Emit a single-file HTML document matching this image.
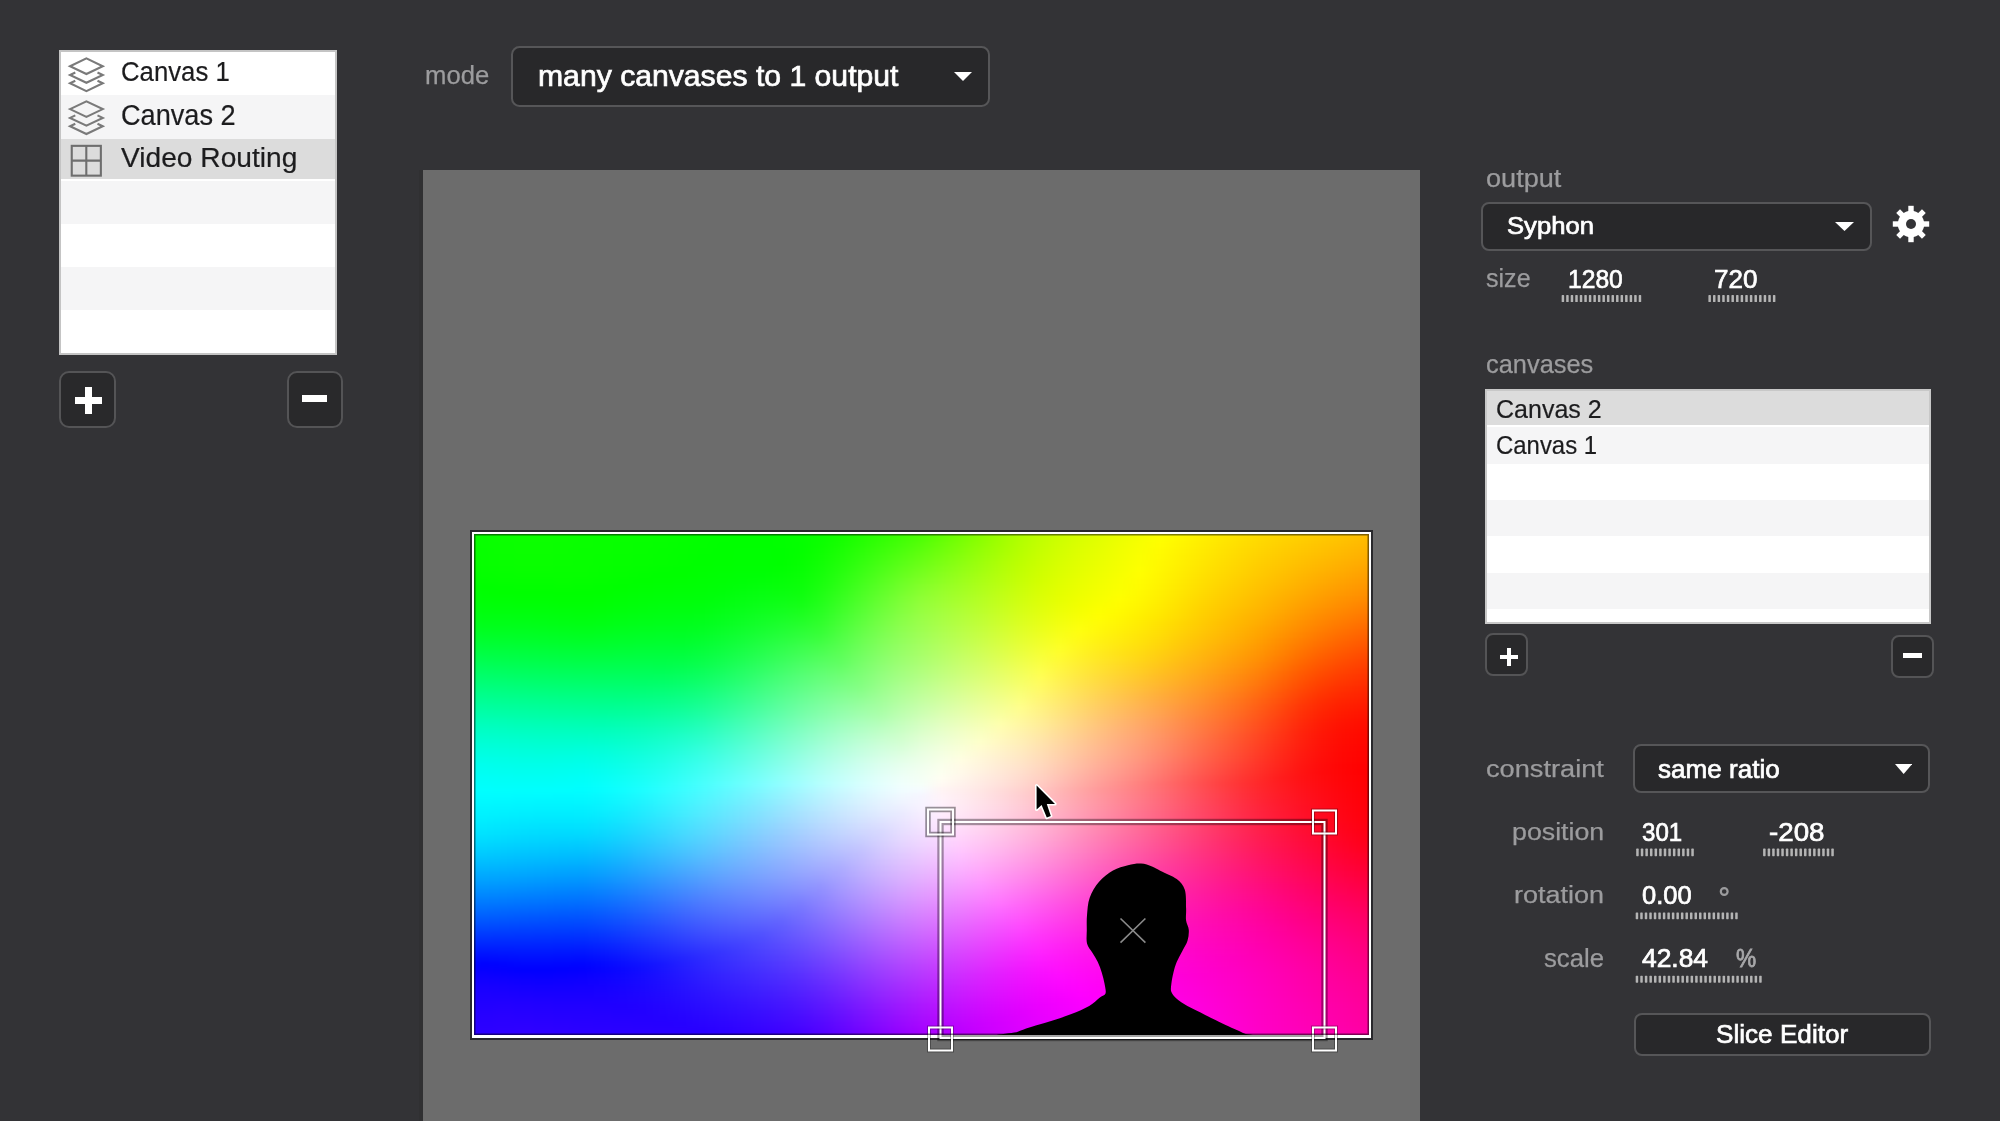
<!DOCTYPE html>
<html><head><meta charset="utf-8"><style>
html,body{margin:0;padding:0;}
body{width:2000px;height:1121px;background:#333336;position:relative;overflow:hidden;font-family:"Liberation Sans",sans-serif;}
.t{position:absolute;line-height:1;white-space:nowrap;transform-origin:0 0;}
</style></head><body>
<div style="position:absolute;left:59px;top:50px;width:278px;height:305px;background:#fff;box-shadow:inset 0 0 0 2px #c4c4c4;"></div>
<div style="position:absolute;left:61px;top:52px;width:274px;height:43px;background:#ffffff;"></div>
<div style="position:absolute;left:61px;top:95px;width:274px;height:43.5px;background:#f5f5f6;"></div>
<div style="position:absolute;left:61px;top:138.5px;width:274px;height:42.5px;background:#ffffff;"></div>
<div style="position:absolute;left:61px;top:181px;width:274px;height:43px;background:#f5f5f6;"></div>
<div style="position:absolute;left:61px;top:224px;width:274px;height:43px;background:#ffffff;"></div>
<div style="position:absolute;left:61px;top:267px;width:274px;height:43px;background:#f5f5f6;"></div>
<div style="position:absolute;left:61px;top:310px;width:274px;height:43px;background:#ffffff;"></div>
<div style="position:absolute;left:61px;top:138.5px;width:274px;height:40.0px;background:#dcdcdc;"></div>
<svg style="position:absolute;left:0;top:0" width="120" height="200" viewBox="0 0 120 200" fill="none" stroke="#7a7a7a" stroke-width="2.1" stroke-linejoin="miter">
<g transform="translate(0,0)">
<path d="M70.05 66.2 L86.4 58.4 L102.75 66.2 L86.4 74 Z"/>
<path d="M75.3 72.5 L70.05 75 L86.4 82.8 L102.75 75 L97.5 72.5"/>
<path d="M75.3 80.8 L70.05 83.3 L86.4 91.1 L102.75 83.3 L97.5 80.8"/>
</g></svg>
<svg style="position:absolute;left:0;top:0" width="120" height="200" viewBox="0 0 120 200" fill="none" stroke="#7a7a7a" stroke-width="2.1" stroke-linejoin="miter">
<g transform="translate(0,42.9)">
<path d="M70.05 66.2 L86.4 58.4 L102.75 66.2 L86.4 74 Z"/>
<path d="M75.3 72.5 L70.05 75 L86.4 82.8 L102.75 75 L97.5 72.5"/>
<path d="M75.3 80.8 L70.05 83.3 L86.4 91.1 L102.75 83.3 L97.5 80.8"/>
</g></svg>
<svg style="position:absolute;left:0;top:0" width="120" height="200" viewBox="0 0 120 200" fill="none" stroke="#6e6e6e" stroke-width="2.1"><rect x="71.75" y="145.85" width="29.1" height="29.8"/><path d="M86.3 145.85 V175.65 M71.75 160.6 H100.85"/></svg>
<div class="t" style="left:121.40px;top:58.11px;font-size:27.93px;color:#1c1c1e;transform:scaleX(0.9220);-webkit-text-stroke:0.2px #1c1c1e;">Canvas 1</div>
<div class="t" style="left:121.30px;top:100.65px;font-size:28.64px;color:#1c1c1e;transform:scaleX(0.9478);-webkit-text-stroke:0.2px #1c1c1e;">Canvas 2</div>
<div class="t" style="left:121.30px;top:144.83px;font-size:26.90px;color:#1c1c1e;transform:scaleX(1.0468);-webkit-text-stroke:0.2px #1c1c1e;">Video Routing</div>
<div style="position:absolute;left:59px;top:371px;width:57px;height:57px;background:#29292b;border:2px solid #545456;border-radius:10px;box-sizing:border-box;"></div>
<div style="position:absolute;left:74.6px;top:396.8px;width:27.900000000000006px;height:7.099999999999966px;background:#fff;"></div>
<div style="position:absolute;left:85px;top:386.8px;width:7px;height:27.5px;background:#fff;"></div>
<div style="position:absolute;left:287px;top:371px;width:56px;height:57px;background:#29292b;border:2px solid #545456;border-radius:10px;box-sizing:border-box;"></div>
<div style="position:absolute;left:302px;top:395px;width:25px;height:7px;background:#fff;"></div>
<div class="t" style="left:425.12px;top:62.55px;font-size:25.34px;color:#9c9c9e;transform:scaleX(1.0140);-webkit-text-stroke:0.25px #9c9c9e;">mode</div>
<div style="position:absolute;left:511px;top:46px;width:479px;height:60.5px;background:#28282a;border:2px solid #565658;border-radius:8.5px;box-sizing:border-box;"></div>
<div class="t" style="left:537.85px;top:60.99px;font-size:29.78px;color:#ffffff;transform:scaleX(1.0132);-webkit-text-stroke:0.7px #ffffff;">many canvases to 1 output</div>
<svg style="position:absolute;left:954px;top:72px" width="18" height="9" viewBox="0 0 18 9"><path d="M0 0 H18 L9.0 9 Z" fill="#fff"/></svg>
<div style="position:absolute;left:419px;top:170px;width:4px;height:951px;background:#303032;"></div>
<div style="position:absolute;left:423px;top:170px;width:997px;height:951px;background:#6c6c6c;"></div>
<div style="position:absolute;left:470.3px;top:530.3px;width:902.4000000000001px;height:509.4000000000001px;background:#28282c;"></div>
<div style="position:absolute;left:472px;top:532px;width:899px;height:506px;background:#fff;"></div>
<div style="position:absolute;left:474px;top:534px;width:895px;height:501px;overflow:hidden;"><div style="position:absolute;inset:0;box-shadow:inset 0 0 0 1.5px rgba(0,0,0,0.5);z-index:2"></div><div id="grad" style="position:absolute;left:-10px;top:-10px;width:915px;height:521px;filter:blur(2px);"><div style="height:5.989px;background:linear-gradient(90deg,#07ff00,#0aff00,#0cff00,#0cff00,#0cff00,#0bff00,#0aff00,#09ff00,#09ff00,#08ff00,#07ff00,#05ff00,#03ff00,#02ff00,#01ff00,#01ff00,#02ff00,#05ff00,#0bff00,#14ff00,#1fff00,#2bff00,#39ff00,#48ff00,#5bff00,#71ff00,#86ff00,#9aff00,#acff00,#bcff00,#c9ff00,#d5ff00,#dfff00,#e9ff00,#f2ff00,#faff00,#fffb00,#fff400,#ffed00,#ffe600,#ffdf00,#ffd900,#ffd400,#ffcf00,#ffca00,#ffc500,#ffbf00)"></div><div style="height:5.989px;background:linear-gradient(90deg,#07ff00,#09ff00,#0bff00,#0cff00,#0cff00,#0bff00,#09ff00,#09ff00,#08ff00,#08ff00,#06ff00,#04ff00,#03ff00,#01ff00,#00ff00,#00ff00,#02ff00,#05ff00,#0bff00,#15ff00,#20ff00,#2eff01,#3cff01,#4bff01,#5fff01,#74ff00,#89ff00,#9dff00,#afff00,#bfff00,#ccff00,#d7ff00,#e1ff00,#ebff00,#f4ff00,#fcff00,#fff900,#fff200,#ffea00,#ffe300,#ffdc00,#ffd600,#ffd100,#ffcc00,#ffc600,#ffc100,#ffbb00)"></div><div style="height:5.989px;background:linear-gradient(90deg,#06ff00,#08ff00,#0bff00,#0cff00,#0cff00,#0bff00,#09ff00,#08ff00,#08ff00,#07ff00,#06ff00,#04ff00,#02ff00,#01ff00,#00ff00,#00ff00,#01ff00,#05ff00,#0bff00,#16ff00,#24ff02,#32ff04,#41ff05,#50ff05,#64ff04,#78ff03,#8cff00,#a0ff00,#b2ff00,#c1ff00,#ceff00,#d9ff00,#e3ff00,#edff00,#f6ff00,#feff00,#fff700,#ffef00,#ffe800,#ffe000,#ffd900,#ffd300,#ffce00,#ffc800,#ffc300,#ffbd00,#ffb700)"></div><div style="height:5.989px;background:linear-gradient(90deg,#05ff00,#08ff00,#0aff00,#0bff00,#0bff00,#0aff00,#09ff00,#08ff00,#07ff00,#06ff00,#05ff00,#03ff00,#02ff00,#00ff00,#00ff00,#00ff00,#01ff00,#04ff00,#0cff00,#18ff02,#27ff05,#37ff07,#46ff09,#56ff09,#6aff08,#7dff06,#90ff03,#a3ff00,#b5ff00,#c4ff00,#d1ff00,#dcff00,#e5ff00,#efff00,#f8ff00,#fffd00,#fff500,#ffed00,#ffe500,#ffde00,#ffd700,#ffd000,#ffca00,#ffc400,#ffbf00,#ffb900,#ffb300)"></div><div style="height:5.989px;background:linear-gradient(90deg,#05ff00,#07ff00,#0aff00,#0bff00,#0bff00,#0aff00,#08ff00,#08ff00,#07ff00,#06ff00,#04ff00,#03ff00,#01ff00,#00ff00,#00ff01,#00ff01,#00ff00,#04ff00,#0eff01,#1cff05,#2cff08,#3cff0b,#4cff0d,#5dff0d,#6fff0c,#82ff09,#95ff06,#a6ff02,#b7ff00,#c6ff00,#d3ff00,#deff00,#e7ff00,#f1ff00,#f9ff00,#fffb00,#fff300,#ffeb00,#ffe300,#ffdb00,#ffd400,#ffcd00,#ffc700,#ffc100,#ffbb00,#ffb500,#ffaf00)"></div><div style="height:5.989px;background:linear-gradient(90deg,#04ff00,#07ff00,#09ff00,#0aff00,#0aff00,#09ff00,#08ff00,#07ff00,#06ff00,#05ff00,#04ff00,#02ff00,#00ff00,#00ff00,#00ff01,#00ff01,#00ff00,#05ff00,#10ff03,#1fff07,#30ff0c,#41ff0f,#53ff11,#64ff11,#76ff10,#87ff0d,#99ff09,#aaff04,#baff00,#c9ff00,#d5ff00,#e0ff00,#e9ff00,#f2ff00,#fbff00,#fffa00,#fff100,#ffe900,#ffe100,#ffd900,#ffd100,#ffca00,#ffc300,#ffbd00,#ffb700,#ffb100,#ffaa00)"></div><div style="height:5.989px;background:linear-gradient(90deg,#03ff00,#06ff00,#08ff00,#09ff00,#09ff00,#08ff00,#07ff00,#06ff00,#05ff00,#04ff00,#03ff00,#01ff00,#00ff00,#00ff01,#00ff02,#00ff02,#00ff00,#06ff02,#12ff05,#22ff0a,#34ff0f,#47ff13,#59ff16,#6aff16,#7cff14,#8dff11,#9dff0c,#aeff06,#bdff01,#cbff00,#d8ff00,#e2ff00,#ebff00,#f4ff00,#fcff00,#fff800,#fff000,#ffe700,#ffde00,#ffd600,#ffce00,#ffc700,#ffc000,#ffb900,#ffb200,#ffac00,#ffa600)"></div><div style="height:5.989px;background:linear-gradient(90deg,#02ff00,#05ff00,#07ff00,#08ff00,#08ff00,#07ff00,#07ff00,#05ff00,#04ff00,#03ff00,#01ff00,#00ff00,#00ff01,#00ff02,#00ff03,#00ff03,#01ff02,#07ff04,#14ff08,#25ff0d,#39ff13,#4cff18,#5fff1a,#71ff1b,#82ff19,#92ff15,#a1ff0f,#b1ff09,#c0ff02,#ceff00,#daff00,#e4ff00,#edff00,#f5ff00,#feff00,#fff700,#ffee00,#ffe500,#ffdc00,#ffd400,#ffcb00,#ffc400,#ffbc00,#ffb500,#ffae00,#ffa700,#ffa100)"></div><div style="height:5.989px;background:linear-gradient(90deg,#00ff00,#04ff00,#05ff00,#06ff00,#06ff00,#06ff00,#06ff00,#04ff00,#03ff00,#01ff00,#00ff00,#00ff00,#00ff02,#00ff04,#00ff05,#00ff05,#03ff05,#09ff06,#17ff0a,#29ff11,#3dff17,#52ff1c,#66ff1f,#78ff20,#88ff1e,#97ff19,#a6ff12,#b5ff0b,#c3ff04,#d0ff00,#dcff00,#e6ff00,#efff00,#f7ff00,#fffe00,#fff500,#ffec00,#ffe200,#ffd900,#ffd100,#ffc900,#ffc000,#ffb800,#ffb000,#ffa900,#ffa200,#ff9c00)"></div><div style="height:5.989px;background:linear-gradient(90deg,#00ff02,#02ff00,#04ff00,#04ff00,#04ff00,#05ff00,#04ff00,#03ff00,#01ff00,#00ff00,#00ff01,#00ff02,#00ff04,#00ff05,#00ff07,#02ff08,#05ff08,#0bff08,#19ff0d,#2dff14,#42ff1b,#57ff21,#6cff25,#7eff25,#8dff23,#9cff1d,#aaff16,#b8ff0e,#c6ff06,#d3ff00,#dfff00,#e9ff00,#f1ff00,#f9ff00,#fffc00,#fff400,#ffea00,#ffe000,#ffd700,#ffce00,#ffc500,#ffbd00,#ffb400,#ffac00,#ffa400,#ff9d00,#ff9700)"></div><div style="height:5.989px;background:linear-gradient(90deg,#00ff04,#00ff00,#01ff00,#02ff00,#02ff00,#03ff00,#02ff00,#01ff00,#00ff00,#00ff02,#00ff03,#00ff04,#00ff05,#00ff07,#01ff0a,#04ff0c,#07ff0b,#0cff0b,#1cff10,#30ff18,#46ff20,#5cff26,#71ff2a,#84ff2b,#93ff28,#a0ff22,#aeff1a,#bbff12,#c9ff09,#d6ff02,#e1ff00,#ebff00,#f3ff00,#faff00,#fffb00,#fff200,#ffe800,#ffde00,#ffd400,#ffcb00,#ffc200,#ffb900,#ffb000,#ffa700,#ff9f00,#ff9800,#ff9100)"></div><div style="height:5.989px;background:linear-gradient(90deg,#00ff06,#00ff02,#00ff00,#00ff00,#00ff00,#00ff00,#00ff00,#00ff00,#00ff03,#00ff05,#00ff06,#00ff07,#00ff08,#00ff0a,#03ff0e,#06ff10,#09ff0f,#0eff0e,#1fff14,#34ff1c,#4bff24,#61ff2b,#77ff2f,#8aff30,#98ff2d,#a4ff26,#b1ff1e,#bfff15,#ccff0c,#d9ff04,#e4ff00,#edff00,#f5ff00,#fcff00,#fff900,#fff000,#ffe600,#ffdb00,#ffd100,#ffc800,#ffbf00,#ffb500,#ffac00,#ffa200,#ff9a00,#ff9300,#ff8c00)"></div><div style="height:5.989px;background:linear-gradient(90deg,#00ff09,#00ff05,#00ff04,#00ff03,#00ff03,#00ff02,#00ff02,#00ff03,#00ff06,#00ff08,#00ff09,#00ff0a,#00ff0a,#01ff0e,#05ff12,#08ff14,#0cff14,#11ff12,#22ff18,#38ff21,#4fff29,#66ff30,#7cff35,#8fff36,#9cff32,#a8ff2b,#b5ff23,#c2ff19,#cfff0f,#dcff07,#e6ff01,#f0ff00,#f7ff00,#fffe00,#fff700,#ffee00,#ffe300,#ffd800,#ffce00,#ffc500,#ffbb00,#ffb100,#ffa700,#ff9d00,#ff9400,#ff8d00,#ff8600)"></div><div style="height:5.989px;background:linear-gradient(90deg,#00ff0d,#00ff09,#00ff08,#00ff07,#00ff07,#00ff05,#00ff05,#00ff06,#00ff09,#00ff0b,#00ff0d,#00ff0d,#00ff0e,#02ff12,#06ff16,#0bff19,#10ff19,#15ff17,#25ff1d,#3cff26,#53ff2f,#6aff35,#80ff3a,#93ff3b,#a0ff37,#acff30,#b8ff27,#c5ff1d,#d2ff13,#deff0a,#e9ff04,#f2ff00,#faff00,#fffc00,#fff500,#ffeb00,#ffe000,#ffd500,#ffcb00,#ffc200,#ffb800,#ffad00,#ffa200,#ff9800,#ff8f00,#ff8700,#ff8000)"></div><div style="height:5.989px;background:linear-gradient(90deg,#00ff12,#00ff0d,#00ff0c,#00ff0c,#00ff0b,#00ff0a,#00ff09,#00ff0a,#00ff0d,#00ff0f,#00ff11,#00ff11,#00ff12,#04ff17,#08ff1b,#0eff1e,#13ff1f,#1aff1d,#29ff22,#40ff2b,#57ff34,#6eff3b,#83ff3f,#96ff40,#a3ff3d,#afff36,#bbff2c,#c8ff22,#d5ff17,#e1ff0e,#ecff07,#f5ff02,#fdff00,#fffa00,#fff200,#ffe900,#ffde00,#ffd200,#ffc800,#ffbe00,#ffb400,#ffa900,#ff9d00,#ff9200,#ff8900,#ff8000,#ff7900)"></div><div style="height:5.989px;background:linear-gradient(90deg,#00ff17,#00ff12,#00ff12,#00ff11,#00ff10,#00ff0e,#00ff0d,#00ff0f,#00ff12,#00ff14,#00ff15,#00ff16,#01ff17,#05ff1c,#0aff20,#11ff24,#17ff25,#1fff24,#2dff27,#44ff31,#5bff3a,#72ff40,#87ff45,#99ff46,#a6ff42,#b2ff3b,#beff32,#cbff27,#d8ff1c,#e4ff12,#efff0b,#f8ff05,#fffe02,#fff701,#ffef00,#ffe600,#ffdb01,#ffcf01,#ffc500,#ffba00,#ffb000,#ffa400,#ff9800,#ff8c00,#ff8200,#ff7a00,#ff7300)"></div><div style="height:5.989px;background:linear-gradient(90deg,#00ff1d,#00ff18,#00ff18,#00ff17,#00ff16,#00ff14,#00ff13,#00ff14,#00ff17,#00ff19,#00ff1a,#00ff1b,#01ff1d,#06ff21,#0dff26,#14ff2a,#1cff2c,#24ff2b,#31ff2d,#48ff37,#5fff3f,#76ff46,#8aff4a,#9bff4b,#a9ff47,#b5ff40,#c1ff37,#ceff2c,#dbff21,#e7ff17,#f2ff0f,#fbff09,#fffb06,#fff404,#ffec02,#ffe202,#ffd702,#ffcc02,#ffc101,#ffb700,#ffac00,#ff9f00,#ff9200,#ff8600,#ff7c00,#ff7300,#ff6c00)"></div><div style="height:5.989px;background:linear-gradient(90deg,#00ff24,#00ff1f,#00ff1e,#00ff1e,#00ff1c,#00ff1a,#00ff19,#00ff1a,#00ff1d,#00ff1f,#00ff20,#00ff20,#02ff22,#08ff27,#0fff2c,#17ff30,#20ff33,#2aff33,#35ff33,#4cff3d,#63ff45,#79ff4c,#8dff50,#9dff50,#abff4d,#b8ff46,#c4ff3d,#d1ff32,#deff27,#eaff1c,#f5ff14,#feff0d,#fff809,#fff106,#ffe905,#ffdf04,#ffd404,#ffc904,#ffbe03,#ffb301,#ffa700,#ff9a00,#ff8d00,#ff8000,#ff7500,#ff6c00,#ff6500)"></div><div style="height:5.989px;background:linear-gradient(90deg,#00ff2c,#00ff27,#00ff26,#00ff25,#00ff24,#00ff22,#00ff20,#00ff21,#00ff24,#00ff25,#00ff26,#00ff26,#03ff29,#0aff2e,#12ff33,#1bff37,#25ff3a,#2fff3b,#39ff3a,#50ff43,#67ff4c,#7cff52,#8fff56,#a0ff56,#aeff53,#bbff4c,#c7ff43,#d4ff38,#e1ff2c,#edff22,#f8ff19,#fffc12,#fff50d,#ffed0a,#ffe507,#ffdc06,#ffd006,#ffc505,#ffba04,#ffaf02,#ffa300,#ff9500,#ff8700,#ff7a00,#ff6e00,#ff6500,#ff5e00)"></div><div style="height:5.989px;background:linear-gradient(90deg,#00ff34,#00ff30,#00ff2e,#00ff2d,#00ff2b,#00ff29,#00ff28,#00ff29,#00ff2b,#00ff2c,#00ff2d,#00ff2c,#04ff30,#0bff35,#14ff3a,#1fff3f,#2aff42,#35ff43,#40ff42,#54ff4a,#6bff52,#80ff58,#92ff5c,#a2ff5c,#b0ff59,#bdff52,#caff49,#d7ff3e,#e4ff33,#f0ff28,#fbff1f,#fff917,#fff112,#ffea0e,#ffe20a,#ffd809,#ffcc08,#ffc107,#ffb606,#ffab03,#ff9e01,#ff8f00,#ff8100,#ff7300,#ff6700,#ff5e00,#ff5800)"></div><div style="height:5.989px;background:linear-gradient(90deg,#00ff3d,#00ff39,#00ff37,#00ff36,#00ff34,#00ff32,#00ff31,#00ff31,#00ff33,#00ff34,#00ff34,#00ff34,#05ff37,#0dff3c,#17ff42,#23ff46,#2fff4a,#3bff4c,#46ff4b,#58ff50,#6eff58,#83ff5e,#95ff62,#a5ff62,#b3ff5f,#c0ff59,#cdff50,#daff45,#e7ff39,#f3ff2f,#fdff25,#fff61e,#ffee18,#ffe612,#ffde0e,#ffd40c,#ffc80b,#ffbd0a,#ffb108,#ffa605,#ff9902,#ff8a00,#ff7a00,#ff6c00,#ff6000,#ff5700,#ff5100)"></div><div style="height:5.989px;background:linear-gradient(90deg,#00ff47,#00ff43,#00ff41,#00ff3f,#00ff3d,#00ff3b,#00ff3a,#00ff3a,#00ff3b,#00ff3c,#00ff3c,#01ff3c,#07ff3f,#0fff44,#1aff49,#26ff4e,#34ff52,#41ff54,#4dff54,#5cff56,#72ff5f,#86ff65,#98ff68,#a7ff68,#b5ff65,#c3ff60,#d0ff57,#dcff4c,#e9ff40,#f6ff36,#fffd2c,#fff324,#ffea1d,#ffe217,#ffda12,#ffcf10,#ffc40f,#ffb80d,#ffad0a,#ffa106,#ff9403,#ff8401,#ff7400,#ff6500,#ff5900,#ff5000,#ff4a00)"></div><div style="height:5.989px;background:linear-gradient(90deg,#00ff51,#00ff4d,#00ff4a,#00ff48,#00ff46,#00ff44,#00ff43,#00ff43,#00ff44,#00ff44,#00ff44,#02ff44,#08ff47,#11ff4c,#1dff51,#2aff56,#38ff5a,#46ff5d,#53ff5d,#5fff5d,#75ff65,#89ff6b,#9bff6e,#aaff6e,#b8ff6c,#c6ff67,#d2ff5e,#dfff53,#ecff48,#f8ff3d,#fffa33,#fff02b,#ffe724,#ffdf1d,#ffd617,#ffcb14,#ffbf13,#ffb410,#ffa80c,#ff9c08,#ff8f04,#ff7e02,#ff6d00,#ff5e00,#ff5200,#ff4900,#ff4400)"></div><div style="height:5.989px;background:linear-gradient(90deg,#00ff5b,#00ff57,#00ff54,#00ff52,#00ff50,#00ff4e,#00ff4d,#00ff4d,#00ff4d,#00ff4d,#00ff4c,#03ff4d,#0aff4f,#14ff54,#20ff5a,#2eff5f,#3dff63,#4cff66,#59ff66,#63ff64,#79ff6c,#8dff72,#9eff75,#adff75,#bbff73,#c9ff6e,#d5ff66,#e2ff5b,#efff50,#fbff45,#fff73b,#ffed33,#ffe32b,#ffda24,#ffd11d,#ffc619,#ffba17,#ffaf14,#ffa30f,#ff970a,#ff8906,#ff7803,#ff6600,#ff5700,#ff4b00,#ff4200,#ff3d00)"></div><div style="height:5.989px;background:linear-gradient(90deg,#00ff65,#00ff62,#00ff5f,#00ff5c,#00ff5a,#00ff58,#00ff57,#00ff56,#00ff56,#00ff56,#00ff55,#04ff56,#0bff59,#16ff5d,#24ff63,#32ff67,#42ff6b,#51ff6e,#5fff6f,#6aff6d,#7cff72,#90ff79,#a2ff7c,#b1ff7c,#bfff7a,#ccff75,#d8ff6d,#e5ff63,#f1ff58,#fdff4d,#fff543,#ffea3a,#ffe032,#ffd62b,#ffcd23,#ffc11f,#ffb61c,#ffaa17,#ff9e12,#ff910d,#ff8308,#ff7104,#ff5f01,#ff5000,#ff4400,#ff3c00,#ff3700)"></div><div style="height:5.989px;background:linear-gradient(90deg,#00ff6f,#00ff6c,#00ff69,#00ff66,#00ff64,#00ff62,#00ff61,#00ff60,#00ff60,#00ff5f,#01ff5f,#06ff60,#0dff62,#19ff67,#27ff6b,#37ff70,#47ff74,#56ff77,#64ff78,#70ff76,#80ff79,#94ff80,#a5ff83,#b4ff84,#c2ff82,#cfff7d,#dbff75,#e7ff6b,#f3ff60,#fffe55,#fff24b,#ffe742,#ffdc3a,#ffd232,#ffc82b,#ffbc25,#ffb121,#ffa51c,#ff9816,#ff8b0f,#ff7c0a,#ff6a05,#ff5802,#ff4900,#ff3e00,#ff3600,#ff3200)"></div><div style="height:5.989px;background:linear-gradient(90deg,#00ff79,#00ff76,#00ff74,#00ff71,#00ff6e,#00ff6d,#00ff6b,#00ff6a,#00ff6a,#00ff69,#02ff69,#07ff6a,#10ff6c,#1cff70,#2aff74,#3bff79,#4bff7c,#5bff7f,#6aff80,#76ff7f,#83ff7f,#97ff86,#a9ff8a,#b8ff8b,#c6ff89,#d3ff85,#dfff7d,#eaff73,#f6ff68,#fffc5e,#fff054,#ffe44a,#ffd942,#ffce3a,#ffc332,#ffb82c,#ffac26,#ffa020,#ff9319,#ff8612,#ff760c,#ff6407,#ff5203,#ff4200,#ff3700,#ff3000,#ff2c00)"></div><div style="height:5.989px;background:linear-gradient(90deg,#00ff83,#00ff81,#00ff7e,#00ff7b,#00ff79,#00ff77,#00ff76,#00ff75,#00ff74,#01ff73,#04ff74,#09ff75,#12ff77,#1fff7a,#2eff7e,#3fff81,#50ff85,#60ff87,#6fff89,#7cff88,#87ff86,#9bff8d,#adff92,#bcff93,#caff91,#d6ff8d,#e2ff85,#edff7c,#f8ff71,#fffa66,#ffee5c,#ffe153,#ffd64a,#ffca42,#ffbf3a,#ffb333,#ffa72c,#ff9b25,#ff8e1d,#ff8015,#ff700e,#ff5d08,#ff4b04,#ff3c01,#ff3100,#ff2a00,#ff2700)"></div><div style="height:5.989px;background:linear-gradient(90deg,#00ff8d,#00ff8b,#00ff88,#00ff86,#00ff83,#00ff81,#00ff80,#00ff7f,#00ff7e,#02ff7e,#05ff7e,#0bff7f,#14ff81,#22ff84,#32ff87,#43ff8a,#54ff8d,#65ff90,#75ff91,#82ff91,#8dff8f,#9fff94,#b1ff99,#c0ff9a,#cdff99,#daff95,#e5ff8e,#f0ff84,#faff7a,#fff76f,#ffeb65,#ffdf5b,#ffd252,#ffc64a,#ffba42,#ffae3a,#ffa232,#ff9629,#ff8821,#ff7a18,#ff6910,#ff570a,#ff4405,#ff3501,#ff2b00,#ff2500,#ff2200)"></div><div style="height:5.989px;background:linear-gradient(90deg,#00ff96,#00ff95,#00ff92,#00ff90,#00ff8e,#00ff8c,#00ff8a,#00ff89,#00ff88,#03ff88,#07ff89,#0dff8a,#17ff8b,#25ff8e,#35ff90,#47ff93,#59ff96,#6aff98,#7aff9a,#88ff9a,#93ff99,#a3ff9b,#b5ffa0,#c4ffa2,#d1ffa1,#ddff9d,#e8ff96,#f2ff8d,#fdff82,#fff577,#ffe96d,#ffdc63,#ffcf5a,#ffc352,#ffb64a,#ffaa41,#ff9e37,#ff912e,#ff8324,#ff741b,#ff6313,#ff510c,#ff3e06,#ff2f02,#ff2500,#ff2000,#ff1d00)"></div><div style="height:5.989px;background:linear-gradient(90deg,#00ffa0,#00ff9f,#00ff9c,#00ff9a,#00ff98,#00ff96,#00ff95,#00ff93,#01ff93,#04ff93,#09ff93,#0fff94,#1aff95,#28ff97,#39ff9a,#4bff9c,#5dff9e,#6fffa0,#7fffa2,#8effa3,#9affa2,#a7ffa2,#b9ffa8,#c8ffaa,#d5ffa9,#e1ffa5,#ecff9e,#f5ff95,#fffe8b,#fff380,#ffe775,#ffd96b,#ffcc62,#ffbf5a,#ffb352,#ffa648,#ff993d,#ff8c32,#ff7e28,#ff6f1e,#ff5e15,#ff4b0d,#ff3807,#ff2a03,#ff2000,#ff1b00,#ff1900)"></div><div style="height:5.989px;background:linear-gradient(90deg,#00ffaa,#00ffa9,#00ffa6,#00ffa4,#00ffa2,#00ffa0,#00ff9f,#00ff9d,#02ff9d,#05ff9d,#0bff9e,#12ff9f,#1dffa0,#2cffa1,#3dffa3,#4fffa5,#62ffa7,#74ffa8,#85ffaa,#94ffac,#a0ffab,#abffa9,#bdffaf,#ccffb2,#daffb1,#e5ffad,#efffa6,#f8ff9d,#fffc93,#fff188,#ffe47d,#ffd773,#ffc96a,#ffbc62,#ffaf59,#ffa34f,#ff9543,#ff8837,#ff792c,#ff6a21,#ff5818,#ff460f,#ff3308,#ff2503,#ff1c00,#ff1600,#ff1500)"></div><div style="height:5.989px;background:linear-gradient(90deg,#00ffb3,#00ffb2,#00ffb0,#00ffad,#00ffab,#00ffaa,#00ffa9,#00ffa8,#03ffa7,#07ffa7,#0dffa8,#14ffa9,#1fffaa,#2fffab,#41ffac,#54ffae,#67ffaf,#79ffb0,#8affb2,#99ffb4,#a6ffb4,#b0ffb1,#c1ffb6,#d1ffb9,#deffb9,#e8ffb5,#f2ffae,#fbffa5,#fff99b,#ffef90,#ffe285,#ffd47b,#ffc671,#ffb969,#ffac60,#ff9f55,#ff9148,#ff833b,#ff752f,#ff6524,#ff541a,#ff4111,#ff2f09,#ff2104,#ff1801,#ff1200,#ff1100)"></div><div style="height:5.989px;background:linear-gradient(90deg,#00ffbb,#00ffbb,#00ffb9,#00ffb6,#00ffb5,#00ffb4,#00ffb2,#00ffb1,#04ffb1,#09ffb1,#0fffb2,#17ffb3,#23ffb4,#33ffb5,#45ffb5,#58ffb6,#6bffb7,#7dffb8,#8fffbb,#9fffbd,#acffbd,#b7ffbb,#c6ffbe,#d5ffc1,#e2ffc0,#ecffbc,#f5ffb5,#feffad,#fff7a2,#ffed97,#ffe08c,#ffd282,#ffc478,#ffb670,#ffa967,#ff9c5a,#ff8d4d,#ff7f3f,#ff7033,#ff6027,#ff4f1c,#ff3d13,#ff2b0b,#ff1d05,#ff1402,#ff0f00,#ff0e00)"></div><div style="height:5.989px;background:linear-gradient(90deg,#00ffc4,#00ffc4,#00ffc2,#00ffbf,#00ffbe,#00ffbd,#00ffbc,#01ffbb,#05ffbb,#0affbb,#11ffbc,#1affbd,#26ffbe,#37ffbe,#49ffbe,#5cffbf,#70ffbf,#82ffc1,#94ffc3,#a4ffc5,#b2ffc5,#bdffc4,#caffc5,#d9ffc8,#e6ffc8,#f0ffc4,#f8ffbd,#fffcb4,#fff4aa,#ffea9f,#ffdd93,#ffcf88,#ffc17f,#ffb376,#ffa66c,#ff985f,#ff8a51,#ff7b43,#ff6c36,#ff5c2a,#ff4b1f,#ff3915,#ff270c,#ff1a06,#ff1102,#ff0c00,#ff0b00)"></div><div style="height:5.989px;background:linear-gradient(90deg,#00ffcc,#00ffcc,#00ffca,#00ffc8,#00ffc6,#00ffc6,#00ffc5,#02ffc4,#06ffc4,#0cffc4,#14ffc5,#1effc7,#2affc7,#3bffc7,#4dffc7,#61ffc7,#74ffc8,#87ffc9,#99ffcb,#aaffcd,#b8ffcd,#c4ffcc,#cfffcb,#deffcf,#e9ffcf,#f3ffcb,#fbffc4,#fffabb,#fff1b1,#ffe7a5,#ffda9a,#ffcc8e,#ffbe84,#ffb07b,#ffa371,#ff9564,#ff8655,#ff7746,#ff6738,#ff572c,#ff4621,#ff3516,#ff240d,#ff1707,#ff0f03,#ff0a00,#ff0900)"></div><div style="height:5.989px;background:linear-gradient(90deg,#00ffd4,#00ffd4,#00ffd2,#00ffd0,#00ffce,#00ffce,#00ffce,#02ffcd,#07ffcc,#0effcc,#17ffce,#21ffd0,#2effd0,#3fffd0,#51ffcf,#65ffcf,#79ffcf,#8cffd0,#9effd2,#afffd4,#beffd5,#caffd4,#d3ffd2,#e2ffd6,#edffd6,#f6ffd1,#feffca,#fff7c1,#ffefb7,#ffe4ac,#ffd7a0,#ffc994,#ffbb89,#ffad80,#ffa075,#ff9167,#ff8258,#ff7249,#ff633b,#ff532e,#ff4322,#ff3218,#ff220f,#ff1508,#ff0d03,#ff0800,#ff0700)"></div><div style="height:5.989px;background:linear-gradient(90deg,#00ffdb,#00ffdb,#00ffd9,#00ffd7,#00ffd6,#00ffd6,#00ffd7,#03ffd6,#09ffd4,#10ffd4,#19ffd6,#25ffd8,#33ffd9,#43ffd8,#56ffd7,#69ffd7,#7dffd7,#90ffd8,#a3ffda,#b4ffdb,#c3ffdc,#cfffdc,#d8ffd9,#e6ffdd,#f1ffdc,#f9ffd7,#fffcd0,#fff4c7,#ffecbd,#ffe1b1,#ffd4a5,#ffc699,#ffb88e,#ffaa84,#ff9c78,#ff8e6a,#ff7e5b,#ff6e4b,#ff5f3d,#ff4f30,#ff3f24,#ff2e19,#ff1f10,#ff1309,#ff0b04,#ff0601,#ff0500)"></div><div style="height:5.989px;background:linear-gradient(90deg,#00ffe2,#00ffe2,#00ffe0,#00ffde,#00ffdd,#00ffde,#00ffdf,#03ffdd,#0affdc,#12ffdc,#1cffdd,#28ffe0,#37ffe1,#47ffdf,#5affde,#6dffde,#81ffde,#95ffdf,#a7ffe1,#b8ffe2,#c7ffe3,#d4ffe3,#deffe1,#eaffe3,#f4ffe2,#fcffdd,#fff9d5,#fff1cc,#ffe9c2,#ffdeb6,#ffd1a9,#ffc39d,#ffb591,#ffa787,#ff997b,#ff896d,#ff7a5d,#ff6a4d,#ff5a3f,#ff4b32,#ff3b26,#ff2b1a,#ff1c11,#ff110a,#ff0904,#ff0501,#ff0400)"></div><div style="height:5.989px;background:linear-gradient(90deg,#00ffe8,#00ffe8,#00ffe6,#00ffe4,#00ffe4,#00ffe5,#00ffe6,#04ffe4,#0bffe3,#14ffe3,#1fffe4,#2cffe7,#3affe8,#4bffe6,#5dffe5,#71ffe5,#85ffe5,#99ffe6,#abffe7,#bcffe8,#ccffe9,#d9ffe9,#e3ffe8,#edffe8,#f7ffe7,#fffee2,#fff6da,#ffeed0,#ffe6c6,#ffdbba,#ffcead,#ffbfa0,#ffb194,#ffa389,#ff957d,#ff856f,#ff755f,#ff654f,#ff5640,#ff4733,#ff3727,#ff281b,#ff1a12,#ff0f0a,#ff0805,#ff0401,#ff0300)"></div><div style="height:5.989px;background:linear-gradient(90deg,#00ffed,#00ffee,#00ffeb,#00ffea,#00ffea,#00ffeb,#00ffec,#05ffeb,#0cffe9,#16ffe9,#21ffea,#2fffed,#3effee,#4fffed,#61ffec,#75ffec,#88ffec,#9cffed,#afffee,#c0ffee,#cfffef,#ddffef,#e7ffee,#f0ffed,#faffec,#fffbe6,#fff4dd,#ffebd4,#ffe3ca,#ffd8be,#ffcab0,#ffbca3,#ffad97,#ff9f8b,#ff907f,#ff8070,#ff7060,#ff6050,#ff5141,#ff4234,#ff3328,#ff251c,#ff1712,#ff0d0b,#ff0605,#ff0201,#ff0100)"></div><div style="height:5.989px;background:linear-gradient(90deg,#00fff2,#00fff2,#00fff0,#00ffef,#00ffef,#00fff0,#00fff2,#05fff1,#0dffef,#18ffef,#24fff0,#32fff2,#41fff3,#52fff3,#65fff3,#78fff2,#8cfff3,#a0fff3,#b2fff3,#c3fff4,#d2fff4,#e0fff4,#ebfff3,#f3fff1,#fcffef,#fff9e9,#fff1e0,#ffe8d7,#ffdfcd,#ffd4c0,#ffc6b2,#ffb7a5,#ffa898,#ff9a8c,#ff8b7f,#ff7b70,#ff6b60,#ff5b50,#ff4c42,#ff3d34,#ff2f28,#ff211d,#ff1513,#ff0b0c,#ff0606,#ff0102,#ff0000)"></div><div style="height:5.989px;background:linear-gradient(90deg,#00fff6,#00fff7,#00fff5,#00fff4,#00fff4,#00fff5,#00fff7,#06fff6,#0ffff5,#19fff5,#26fff5,#35fff7,#45fff8,#56fff8,#68fff9,#7bfff9,#8ffff9,#a2fff9,#b5fff9,#c5fff9,#d5fff9,#e3fff9,#eefff8,#f4fff4,#fffef2,#fff6eb,#ffede2,#ffe5d9,#ffdbce,#ffd0c2,#ffc1b4,#ffb2a6,#ffa399,#ff958c,#ff867f,#ff7670,#ff6560,#ff5550,#ff4642,#ff3834,#ff2b28,#ff1d1d,#ff1315,#ff0c0e,#ff0608,#ff0203,#ff0000)"></div><div style="height:5.989px;background:linear-gradient(90deg,#00fffa,#00fffa,#00fff9,#00fff9,#00fff9,#00fffa,#00fffb,#07fffb,#10fffa,#1bfffa,#29fffa,#38fffc,#48fffd,#59fffe,#6bfffe,#7efeff,#91feff,#a4feff,#b6fffe,#c7fffe,#d7fffe,#e4fffd,#f0fffc,#f6fff8,#fffaf3,#fff2ec,#ffeae4,#ffe1da,#ffd7cf,#ffcbc3,#ffbcb5,#ffada6,#ff9e99,#ff8f8c,#ff807e,#ff6f70,#ff6060,#ff5051,#ff4142,#ff3435,#ff282a,#ff1d21,#ff1318,#ff0c11,#ff060a,#ff0205,#ff0001)"></div><div style="height:5.989px;background:linear-gradient(90deg,#00fffe,#00fffe,#00fffd,#00fffd,#00fffe,#00fffe,#00feff,#07feff,#11feff,#1dfeff,#2bfeff,#3afdff,#4afcff,#5cfaff,#6ef9ff,#80f9ff,#93f8ff,#a6f9ff,#b8f9ff,#c9faff,#d8fbff,#e5fcff,#f0fdff,#f6fcff,#fff4f4,#ffeeed,#ffe6e4,#ffdcda,#ffd2cf,#ffc5c3,#ffb6b4,#ffa7a6,#ff9899,#ff8b8e,#ff7d81,#ff6e74,#ff5f65,#ff4f56,#ff4147,#ff333a,#ff272e,#ff1d24,#ff131c,#ff0c14,#ff060d,#ff0206,#ff0002)"></div><div style="height:5.989px;background:linear-gradient(90deg,#00fcff,#00fcff,#00fcff,#00fbff,#00fbff,#00faff,#01faff,#08f9ff,#12f9ff,#1ef9ff,#2df9ff,#3df9ff,#4df8ff,#5ef6ff,#70f4ff,#82f3ff,#95f3ff,#a7f3ff,#b9f4ff,#c9f5ff,#d8f6ff,#e5f8ff,#f0f8ff,#f6f5ff,#fff3f8,#ffecf0,#ffe4e6,#ffd9dc,#ffced1,#ffc2c4,#ffb3b7,#ffa5aa,#ff979e,#ff8992,#ff7b85,#ff6c78,#ff5d69,#ff4e5a,#ff404c,#ff323e,#ff2632,#ff1c28,#ff131f,#ff0c17,#ff060f,#ff0208,#ff0004)"></div><div style="height:5.989px;background:linear-gradient(90deg,#00f9ff,#00f9ff,#00f8ff,#00f7ff,#00f6ff,#00f6ff,#01f6ff,#08f5ff,#13f5ff,#20f4ff,#2ff5ff,#3ff5ff,#50f4ff,#61f1ff,#72efff,#84edff,#96edff,#a8eeff,#b9efff,#caf0ff,#d8f2ff,#e5f3ff,#eff4ff,#f7f4ff,#fff2fb,#ffebf2,#ffe2e9,#ffd8df,#ffcdd4,#ffc0c8,#ffb2bb,#ffa3ae,#ff95a2,#ff8795,#ff7989,#ff6a7c,#ff5b6d,#ff4c5f,#ff3e50,#ff3143,#ff2536,#ff1b2c,#ff1323,#ff0c1a,#ff0611,#ff020a,#ff0005)"></div><div style="height:5.989px;background:linear-gradient(90deg,#00f5ff,#00f5ff,#00f4ff,#00f3ff,#00f2ff,#00f2ff,#01f1ff,#09f1ff,#13f0ff,#21efff,#30f0ff,#41f0ff,#52efff,#62ecff,#74e9ff,#85e8ff,#97e7ff,#a9e8ff,#baeaff,#c9ebff,#d7edff,#e4efff,#edefff,#f7f1ff,#ffeffd,#ffe9f4,#ffe0eb,#ffd6e2,#ffcbd7,#ffbecb,#ffb0be,#ffa1b2,#ff93a5,#ff8599,#ff768c,#ff687f,#ff5971,#ff4a63,#ff3d55,#ff3047,#ff243b,#ff1b30,#ff1226,#ff0b1d,#ff0614,#ff020c,#ff0007)"></div><div style="height:5.989px;background:linear-gradient(90deg,#00f1ff,#00f2ff,#00f0ff,#00eeff,#00edff,#00edff,#01edff,#09ecff,#14eaff,#22eaff,#32ebff,#42ecff,#54ebff,#64e7ff,#75e4ff,#86e2ff,#98e2ff,#a9e2ff,#b9e4ff,#c9e6ff,#d6e8ff,#e1eaff,#eaeaff,#f6edff,#ffecfe,#ffe6f6,#ffdded,#ffd3e4,#ffc8d9,#ffbbce,#ffadc2,#ff9eb5,#ff90a8,#ff829c,#ff7390,#ff6583,#ff5675,#ff4867,#ff3b59,#ff2e4b,#ff233f,#ff1a34,#ff122a,#ff0b20,#ff0616,#ff020e,#ff0009)"></div><div style="height:5.989px;background:linear-gradient(90deg,#00edff,#00eeff,#00ebff,#00e9ff,#00e8ff,#00e8ff,#01e8ff,#09e6ff,#15e5ff,#23e5ff,#33e5ff,#44e6ff,#55e5ff,#65e2ff,#76dfff,#87ddff,#98dcff,#a9ddff,#b9dfff,#c7e1ff,#d4e3ff,#dfe4ff,#eae6ff,#f5e9ff,#fee8ff,#ffe2f7,#ffdaef,#ffd0e5,#ffc4db,#ffb7d0,#ffa9c4,#ff9bb8,#ff8cab,#ff7e9f,#ff7093,#ff6286,#ff5379,#ff466b,#ff395d,#ff2d50,#ff2243,#ff1938,#ff112e,#ff0b23,#ff0619,#ff0210,#ff000b)"></div><div style="height:5.989px;background:linear-gradient(90deg,#00e9ff,#00e9ff,#00e6ff,#00e4ff,#00e2ff,#00e2ff,#01e2ff,#0ae0ff,#15dfff,#24dfff,#34e0ff,#44e1ff,#55e0ff,#66dcff,#76d9ff,#87d7ff,#98d6ff,#a8d7ff,#b8d9ff,#c5dbff,#d2ddff,#dcdeff,#e8e2ff,#f4e5ff,#fde3ff,#ffdef8,#ffd5f0,#ffcbe7,#ffc0dd,#ffb3d3,#ffa5c7,#ff97ba,#ff88ae,#ff7aa2,#ff6c96,#ff5e89,#ff507c,#ff436f,#ff3661,#ff2b54,#ff2148,#ff183c,#ff1032,#ff0a27,#ff051d,#ff0213,#ff000e)"></div><div style="height:5.989px;background:linear-gradient(90deg,#00e3ff,#00e4ff,#00e1ff,#00deff,#00dcff,#00dcff,#01dcff,#0adaff,#16d8ff,#24d8ff,#34daff,#45dbff,#56daff,#66d7ff,#77d3ff,#87d1ff,#97d0ff,#a7d1ff,#b6d3ff,#c3d6ff,#cfd7ff,#d8d8ff,#e7deff,#f2e0ff,#fbdeff,#ffd9fa,#ffd1f1,#ffc7e8,#ffbbdf,#ffafd5,#ffa1c9,#ff92bd,#ff84b1,#ff76a5,#ff6899,#ff5a8d,#ff4d80,#ff4073,#ff3466,#ff2959,#ff1f4c,#ff1741,#ff0f36,#ff0a2b,#ff0520,#ff0116,#ff0011)"></div><div style="height:5.989px;background:linear-gradient(90deg,#00ddff,#00deff,#00dbff,#00d8ff,#00d6ff,#00d5ff,#02d4ff,#0ad3ff,#16d2ff,#25d2ff,#35d3ff,#46d5ff,#56d4ff,#66d1ff,#77cdff,#87cbff,#96caff,#a6cbff,#b4cdff,#c0d0ff,#cbd1ff,#d7d4ff,#e6d9ff,#f1daff,#fad9ff,#ffd3fb,#ffcbf3,#ffc2ea,#ffb6e1,#ffaad6,#ff9ccb,#ff8dbf,#ff7fb3,#ff71a7,#ff649c,#ff5690,#ff4983,#ff3d77,#ff316a,#ff275d,#ff1d51,#ff1546,#ff0e3b,#ff0930,#ff0524,#ff011a,#ff0014)"></div><div style="height:5.989px;background:linear-gradient(90deg,#00d6ff,#00d7ff,#00d4ff,#00d1ff,#00cfff,#00cdff,#02ccff,#0bcbff,#17caff,#25cbff,#35ccff,#46ceff,#56cdff,#66caff,#76c7ff,#86c5ff,#95c5ff,#a4c5ff,#b1c7ff,#bdc9ff,#c7caff,#d6cfff,#e4d4ff,#efd5ff,#f8d3ff,#ffcdfc,#ffc6f4,#ffbceb,#ffb1e2,#ffa4d8,#ff96cd,#ff88c1,#ff7ab6,#ff6caa,#ff5f9f,#ff5293,#ff4687,#ff3a7b,#ff2e6f,#ff2462,#ff1b56,#ff144b,#ff0d40,#ff0834,#ff0429,#ff011e,#ff0019)"></div><div style="height:5.989px;background:linear-gradient(90deg,#00cfff,#00cfff,#00ccff,#00c9ff,#00c7ff,#00c5ff,#02c4ff,#0bc3ff,#17c2ff,#26c3ff,#36c5ff,#46c6ff,#56c6ff,#66c4ff,#75c1ff,#84bfff,#93bfff,#a1bfff,#aec1ff,#bac2ff,#c4c3ff,#d4caff,#e2ceff,#edcfff,#f7cdff,#ffc7fe,#ffbff5,#ffb6ed,#ffaae4,#ff9eda,#ff90cf,#ff83c4,#ff75b8,#ff67ad,#ff5aa2,#ff4e96,#ff428b,#ff367f,#ff2c73,#ff2267,#ff195b,#ff1250,#ff0c45,#ff0839,#ff042e,#ff0123,#ff001d)"></div><div style="height:5.989px;background:linear-gradient(90deg,#00c7ff,#00c7ff,#00c4ff,#00c1ff,#00bfff,#00bdff,#02bbff,#0bbaff,#17baff,#26bbff,#36bdff,#46beff,#56bfff,#65bcff,#74baff,#83b9ff,#91b8ff,#9eb9ff,#abbaff,#b5bbff,#c2beff,#d3c5ff,#e0c8ff,#ecc9ff,#f5c6ff,#fec1ff,#ffb9f7,#ffafee,#ffa4e5,#ff98db,#ff8ad1,#ff7dc6,#ff6fbb,#ff62b0,#ff55a5,#ff499a,#ff3d8f,#ff3383,#ff2978,#ff1f6c,#ff1761,#ff1155,#ff0b4a,#ff073e,#ff0333,#ff0129,#ff0023)"></div><div style="height:5.989px;background:linear-gradient(90deg,#00beff,#00beff,#00bcff,#00b9ff,#00b6ff,#00b4ff,#02b2ff,#0bb1ff,#17b1ff,#26b2ff,#36b4ff,#46b6ff,#56b6ff,#65b5ff,#73b4ff,#81b2ff,#8eb2ff,#9bb2ff,#a7b3ff,#b1b4ff,#c1b9ff,#d1bfff,#dfc2ff,#eac2ff,#f4bfff,#fcbaff,#ffb2f8,#ffa8f0,#ff9de7,#ff91dd,#ff84d3,#ff77c8,#ff69bd,#ff5cb2,#ff50a8,#ff449d,#ff3993,#ff2f88,#ff257d,#ff1d72,#ff1566,#ff0f5b,#ff0a50,#ff0644,#ff0339,#ff002f,#ff0028)"></div><div style="height:5.989px;background:linear-gradient(90deg,#00b5ff,#00b5ff,#00b3ff,#00b0ff,#00adff,#00aaff,#02a8ff,#0ba8ff,#17a8ff,#26aaff,#35acff,#46adff,#55aeff,#64aeff,#71adff,#7eacff,#8babff,#98acff,#a3acff,#adacff,#bfb4ff,#cfb9ff,#ddbcff,#e8bcff,#f2b8ff,#fbb3ff,#ffabfa,#ffa1f1,#ff96e9,#ff8adf,#ff7dd5,#ff70ca,#ff63c0,#ff57b5,#ff4bab,#ff3fa1,#ff3597,#ff2b8c,#ff2282,#ff1a77,#ff136c,#ff0d61,#ff0956,#ff054a,#ff023f,#ff0035,#ff002e)"></div><div style="height:5.989px;background:linear-gradient(90deg,#00acff,#00abff,#00a9ff,#00a7ff,#00a4ff,#00a1ff,#029fff,#0b9fff,#179fff,#25a1ff,#35a3ff,#45a4ff,#54a6ff,#62a6ff,#6fa5ff,#7ca5ff,#88a5ff,#94a5ff,#9ea4ff,#aba7ff,#bdaeff,#cdb3ff,#dbb6ff,#e6b5ff,#f0b1ff,#f9abff,#ffa3fc,#ff99f3,#ff8eeb,#ff83e1,#ff76d7,#ff6acd,#ff5dc2,#ff51b8,#ff45ae,#ff3ba4,#ff319b,#ff2891,#ff1f87,#ff177d,#ff1172,#ff0c67,#ff085b,#ff0550,#ff0245,#ff003b,#ff0034)"></div><div style="height:5.989px;background:linear-gradient(90deg,#00a2ff,#00a2ff,#00a0ff,#009dff,#009aff,#0097ff,#0295ff,#0b95ff,#1796ff,#2597ff,#3599ff,#449bff,#539dff,#619eff,#6d9eff,#799eff,#849eff,#8f9dff,#999dff,#a8a1ff,#baa8ff,#cbadff,#d9afff,#e5aeff,#eeaaff,#f7a4ff,#ff9bfe,#ff92f5,#ff87ed,#ff7be4,#ff6fda,#ff63cf,#ff57c5,#ff4bbb,#ff40b1,#ff36a8,#ff2d9f,#ff2495,#ff1c8c,#ff1583,#ff0f78,#ff0a6d,#ff0761,#ff0456,#ff024b,#ff0041,#ff003b)"></div><div style="height:5.989px;background:linear-gradient(90deg,#0098ff,#0097ff,#0095ff,#0093ff,#0090ff,#008dff,#028bff,#0b8bff,#168cff,#248eff,#3490ff,#4392ff,#5294ff,#5f96ff,#6a96ff,#7696ff,#8096ff,#8b96ff,#9494ff,#a69cff,#b8a2ff,#c8a6ff,#d7a8ff,#e3a6ff,#eca2ff,#f59cff,#fd94ff,#ff8af8,#ff7fef,#ff74e6,#ff68dc,#ff5cd2,#ff50c8,#ff45be,#ff3ab5,#ff31ac,#ff28a3,#ff219a,#ff1991,#ff1288,#ff0d7e,#ff0873,#ff0568,#ff035c,#ff0151,#ff0048,#ff0041)"></div><div style="height:5.989px;background:linear-gradient(90deg,#008dff,#008dff,#008bff,#0088ff,#0085ff,#0082ff,#0280ff,#0a81ff,#1682ff,#2484ff,#3386ff,#4289ff,#508bff,#5d8dff,#688eff,#728fff,#7c8eff,#868eff,#918eff,#a496ff,#b59bff,#c69fff,#d5a1ff,#e19fff,#ea9bff,#f394ff,#fb8cff,#ff82fa,#ff77f2,#ff6ce9,#ff61df,#ff55d5,#ff4acb,#ff3fc1,#ff35b8,#ff2caf,#ff24a7,#ff1d9e,#ff1696,#ff108e,#ff0b84,#ff0779,#ff046e,#ff0262,#ff0158,#ff004e,#ff0047)"></div><div style="height:5.989px;background:linear-gradient(90deg,#0083ff,#0082ff,#0080ff,#007dff,#007bff,#0078ff,#0276ff,#0a77ff,#1578ff,#237aff,#327dff,#4180ff,#4f82ff,#5a85ff,#6486ff,#6e87ff,#7786ff,#8085ff,#8e88ff,#a18fff,#b395ff,#c498ff,#d39aff,#df98ff,#e893ff,#f18cff,#f984ff,#ff7afc,#ff6ff4,#ff64eb,#ff59e1,#ff4fd7,#ff44ce,#ff3ac5,#ff30bc,#ff28b3,#ff20ab,#ff1aa3,#ff139b,#ff0e93,#ff098a,#ff067f,#ff0373,#ff0268,#ff005e,#ff0055,#ff004d)"></div><div style="height:5.989px;background:linear-gradient(90deg,#0078ff,#0077ff,#0075ff,#0072ff,#0070ff,#006dff,#026cff,#0a6cff,#156eff,#2270ff,#3073ff,#3f76ff,#4d79ff,#577cff,#617eff,#6a7eff,#737eff,#7b7cff,#8c82ff,#9e89ff,#b08eff,#c191ff,#d092ff,#dc90ff,#e68bff,#ee84ff,#f77bff,#ff72fe,#ff67f7,#ff5cee,#ff52e4,#ff48da,#ff3ed1,#ff34c8,#ff2bbf,#ff23b7,#ff1daf,#ff17a8,#ff11a0,#ff0b99,#ff0790,#ff0485,#ff0379,#ff016e,#ff0064,#ff005b,#ff0053)"></div><div style="height:5.989px;background:linear-gradient(90deg,#006dff,#006cff,#0069ff,#0067ff,#0065ff,#0062ff,#0261ff,#0962ff,#1464ff,#2167ff,#2f6aff,#3d6dff,#4a71ff,#5474ff,#5d75ff,#6576ff,#6d75ff,#7775ff,#897cff,#9b82ff,#ad87ff,#be8aff,#ce8bff,#da88ff,#e383ff,#ec7cff,#f473ff,#fc69ff,#ff5ff9,#ff55f0,#ff4be6,#ff41dd,#ff38d4,#ff2fcb,#ff26c3,#ff1fbb,#ff19b3,#ff14ac,#ff0ea5,#ff099e,#ff0595,#ff038a,#ff027f,#ff0174,#ff006a,#ff0061,#ff0059)"></div><div style="height:5.989px;background:linear-gradient(90deg,#0061ff,#0060ff,#005eff,#005bff,#0059ff,#0057ff,#0256ff,#0957ff,#135aff,#1f5dff,#2d60ff,#3b64ff,#4768ff,#506bff,#596dff,#616dff,#686cff,#756fff,#8676ff,#987bff,#aa80ff,#bb82ff,#cb83ff,#d780ff,#e17bff,#e974ff,#f26bff,#fa61ff,#ff57fb,#ff4df2,#ff44e9,#ff3bdf,#ff32d6,#ff29ce,#ff22c6,#ff1bbf,#ff16b7,#ff11b0,#ff0ca9,#ff08a2,#ff049a,#ff028f,#ff0184,#ff0079,#ff006f,#ff0067,#ff005f)"></div><div style="height:5.989px;background:linear-gradient(90deg,#0056ff,#0054ff,#0052ff,#0050ff,#004eff,#004cff,#014cff,#094dff,#1250ff,#1e53ff,#2b57ff,#385bff,#435fff,#4d62ff,#5564ff,#5c64ff,#6363ff,#7269ff,#836fff,#9574ff,#a779ff,#b87bff,#c87bff,#d479ff,#de73ff,#e76cff,#ef63ff,#f859ff,#ff4ffd,#ff46f4,#ff3deb,#ff35e2,#ff2dd9,#ff25d1,#ff1dca,#ff18c2,#ff13bb,#ff0eb4,#ff0aae,#ff06a7,#ff039e,#ff0194,#ff0089,#ff007f,#ff0075,#ff006c,#ff0064)"></div><div style="height:5.989px;background:linear-gradient(90deg,#0049ff,#0048ff,#0046ff,#0044ff,#0043ff,#0042ff,#0141ff,#0843ff,#1146ff,#1c49ff,#284dff,#3552ff,#4056ff,#4959ff,#505bff,#575bff,#605dff,#6f63ff,#8068ff,#926dff,#a471ff,#b573ff,#c474ff,#d171ff,#db6cff,#e464ff,#ed5bff,#f551ff,#fe47ff,#ff3ef6,#ff36ed,#ff2fe4,#ff27dc,#ff20d4,#ff19cd,#ff14c6,#ff10bf,#ff0cb8,#ff08b2,#ff05ab,#ff02a3,#ff0199,#ff008e,#ff0084,#ff007a,#ff0071,#ff0069)"></div><div style="height:5.989px;background:linear-gradient(90deg,#003dff,#003bff,#003aff,#0039ff,#0038ff,#0037ff,#0136ff,#0738ff,#103cff,#1b40ff,#2644ff,#3149ff,#3c4dff,#4450ff,#4b52ff,#5152ff,#5e57ff,#6d5cff,#7d61ff,#8f66ff,#a16aff,#b26cff,#c16cff,#ce69ff,#d864ff,#e25dff,#eb54ff,#f34aff,#fc40ff,#ff37f8,#ff2ff0,#ff29e7,#ff22df,#ff1cd8,#ff16d0,#ff11c9,#ff0dc2,#ff0abc,#ff07b5,#ff04af,#ff01a7,#ff009d,#ff0092,#ff0088,#ff007f,#ff0076,#ff006e)"></div><div style="height:5.989px;background:linear-gradient(90deg,#0031ff,#002fff,#002eff,#002eff,#002dff,#002cff,#012cff,#072eff,#0f32ff,#1936ff,#233bff,#2e40ff,#3844ff,#4047ff,#4649ff,#4f4cff,#5c51ff,#6a56ff,#7a5bff,#8c5fff,#9e62ff,#af64ff,#be64ff,#ca62ff,#d55cff,#df55ff,#e84cff,#f142ff,#fa38ff,#ff30fa,#ff29f2,#ff23ea,#ff1de2,#ff17db,#ff12d3,#ff0ecd,#ff0bc6,#ff08bf,#ff05b9,#ff03b2,#ff01aa,#ff00a1,#ff0097,#ff008d,#ff0084,#ff007b,#ff0072)"></div><div style="height:5.989px;background:linear-gradient(90deg,#0025ff,#0023ff,#0023ff,#0023ff,#0023ff,#0022ff,#0121ff,#0624ff,#0e28ff,#172dff,#2132ff,#2a37ff,#343bff,#3b3eff,#4341ff,#4e47ff,#5a4bff,#674fff,#7754ff,#8958ff,#9a5bff,#ab5dff,#ba5dff,#c75aff,#d255ff,#dc4eff,#e645ff,#ef3bff,#f831ff,#ff29fc,#ff23f4,#ff1eec,#ff19e5,#ff14de,#ff0fd7,#ff0bd0,#ff08c9,#ff06c3,#ff04bc,#ff02b6,#ff00ae,#ff00a4,#ff009b,#ff0091,#ff0088,#ff007f,#ff0077)"></div><div style="height:5.989px;background:linear-gradient(90deg,#0019ff,#0017ff,#0018ff,#0019ff,#0019ff,#0018ff,#0117ff,#061aff,#0c1fff,#1524ff,#1e29ff,#272eff,#2f32ff,#3736ff,#413cff,#4c41ff,#5745ff,#6549ff,#744dff,#8551ff,#9754ff,#a856ff,#b755ff,#c453ff,#cf4dff,#da46ff,#e33eff,#ed34ff,#f62aff,#ff23fe,#ff1df6,#ff19ee,#ff15e7,#ff10e0,#ff0cda,#ff09d3,#ff06cd,#ff04c6,#ff03c0,#ff01b9,#ff00b1,#ff00a8,#ff009e,#ff0095,#ff008c,#ff0083,#ff007b)"></div><div style="height:5.989px;background:linear-gradient(90deg,#000eff,#000cff,#000eff,#0010ff,#0010ff,#000fff,#000eff,#0511ff,#0b16ff,#131cff,#1b21ff,#2325ff,#2d2bff,#3732ff,#4037ff,#4a3cff,#553fff,#6242ff,#7146ff,#824aff,#944dff,#a54eff,#b44eff,#c14bff,#cc46ff,#d73fff,#e137ff,#eb2dff,#f424ff,#fd1dff,#ff18f8,#ff14f1,#ff11ea,#ff0de3,#ff09dd,#ff07d6,#ff05d0,#ff03c9,#ff01c3,#ff00bc,#ff00b4,#ff00ab,#ff00a2,#ff0099,#ff0090,#ff0087,#ff007f)"></div><div style="height:5.989px;background:linear-gradient(90deg,#0005ff,#0002ff,#0004ff,#0007ff,#0007ff,#0006ff,#0005ff,#0409ff,#0a0eff,#1013ff,#1818ff,#2320ff,#2d27ff,#362dff,#3f32ff,#4836ff,#5339ff,#5f3cff,#6e3fff,#7f43ff,#9146ff,#a147ff,#b047ff,#bd44ff,#c93fff,#d439ff,#df30ff,#e927ff,#f21eff,#fb17ff,#ff13fa,#ff10f3,#ff0ded,#ff0ae6,#ff07e0,#ff04d9,#ff03d3,#ff02cc,#ff01c5,#ff00be,#ff00b7,#ff00ae,#ff00a5,#ff009c,#ff0093,#ff008b,#ff0083)"></div><div style="height:5.989px;background:linear-gradient(90deg,#0400ff,#0600ff,#0300ff,#0000ff,#0000ff,#0100ff,#0300ff,#0604ff,#0b08ff,#110eff,#1a15ff,#241cff,#2d23ff,#3529ff,#3e2dff,#4631ff,#5134ff,#5d36ff,#6c39ff,#7c3cff,#8e3fff,#9e40ff,#ad40ff,#ba3dff,#c738ff,#d232ff,#dc2aff,#e621ff,#f018ff,#f912ff,#ff0ffc,#ff0cf6,#ff0aef,#ff07e9,#ff04e2,#ff03dc,#ff02d5,#ff01cf,#ff00c8,#ff00c1,#ff00b9,#ff00b1,#ff00a8,#ff009f,#ff0096,#ff008e,#ff0086)"></div><div style="height:5.989px;background:linear-gradient(90deg,#0b00ff,#0d00ff,#0a00ff,#0800ff,#0700ff,#0800ff,#0a00ff,#0c03ff,#0f07ff,#150cff,#1c12ff,#2419ff,#2d1fff,#3524ff,#3c28ff,#452cff,#4e2eff,#5a30ff,#6933ff,#7936ff,#8a38ff,#9b39ff,#aa39ff,#b736ff,#c432ff,#cf2cff,#da24ff,#e41cff,#ee14ff,#f70eff,#fe0bff,#ff09f8,#ff07f2,#ff05ec,#ff03e5,#ff01df,#ff00d8,#ff00d1,#ff00ca,#ff00c3,#ff00bb,#ff00b3,#ff00aa,#ff00a2,#ff0099,#ff0091,#ff0089)"></div><div style="height:5.989px;background:linear-gradient(90deg,#1100ff,#1300ff,#1100ff,#0e00ff,#0d00ff,#0e00ff,#0f00ff,#1102ff,#1306ff,#180aff,#1e0fff,#2515ff,#2d1bff,#3420ff,#3b24ff,#4327ff,#4c29ff,#582aff,#662dff,#762fff,#8832ff,#9833ff,#a732ff,#b530ff,#c12cff,#cd26ff,#d81fff,#e217ff,#ec10ff,#f50aff,#fc08ff,#ff06fb,#ff04f4,#ff02ee,#ff01e8,#ff00e1,#ff00db,#ff00d3,#ff00cc,#ff00c5,#ff00bd,#ff00b5,#ff00ac,#ff00a4,#ff009c,#ff0094,#ff008c)"></div><div style="height:5.989px;background:linear-gradient(90deg,#1600ff,#1800ff,#1600ff,#1400ff,#1300ff,#1300ff,#1400ff,#1501ff,#1704ff,#1a08ff,#1f0dff,#2612ff,#2c17ff,#331cff,#391fff,#4122ff,#4a23ff,#5525ff,#6327ff,#7429ff,#852bff,#952cff,#a52bff,#b229ff,#bf25ff,#cb20ff,#d61aff,#e013ff,#ea0cff,#f207ff,#fa05ff,#ff03fd,#ff02f7,#ff01f1,#ff00eb,#ff00e4,#ff00dd,#ff00d6,#ff00ce,#ff00c7,#ff00bf,#ff00b7,#ff00ae,#ff00a6,#ff009e,#ff0097,#ff008f)"></div><div style="height:5.989px;background:linear-gradient(90deg,#1a00ff,#1c00ff,#1b00ff,#1900ff,#1800ff,#1800ff,#1800ff,#1901ff,#1a03ff,#1d06ff,#210aff,#260fff,#2c13ff,#3217ff,#381bff,#3f1dff,#481eff,#5320ff,#6121ff,#7124ff,#8225ff,#9326ff,#a225ff,#b023ff,#bd1fff,#c91bff,#d415ff,#de0fff,#e809ff,#f004ff,#f702ff,#fe01ff,#ff00f9,#ff00f3,#ff00ed,#ff00e7,#ff00df,#ff00d8,#ff00d0,#ff00c8,#ff00c0,#ff00b8,#ff00b0,#ff00a8,#ff00a1,#ff0099,#ff0091)"></div><div style="height:5.989px;background:linear-gradient(90deg,#1d00ff,#1f00ff,#1f00ff,#1e00ff,#1d00ff,#1c00ff,#1c00ff,#1c00ff,#1d02ff,#1f04ff,#2208ff,#260cff,#2b10ff,#3113ff,#3716ff,#3e18ff,#4619ff,#511aff,#5e1cff,#6e1eff,#7f1fff,#9020ff,#a01fff,#ae1dff,#bb1aff,#c716ff,#d210ff,#dc0bff,#e506ff,#ee02ff,#f500ff,#fb00ff,#ff00fc,#ff00f6,#ff00f0,#ff00e9,#ff00e2,#ff00da,#ff00d2,#ff00ca,#ff00c2,#ff00ba,#ff00b2,#ff00aa,#ff00a3,#ff009b,#ff0093)"></div><div style="height:5.989px;background:linear-gradient(90deg,#2000ff,#2200ff,#2300ff,#2200ff,#2100ff,#2000ff,#2000ff,#1f00ff,#1f00ff,#2002ff,#2305ff,#2609ff,#2a0dff,#2f10ff,#3512ff,#3c14ff,#4415ff,#4e16ff,#5c17ff,#6c18ff,#7d1aff,#8e1aff,#9e19ff,#ac17ff,#b914ff,#c511ff,#d00cff,#da07ff,#e303ff,#ec00ff,#f300ff,#f900ff,#ff00fe,#ff00f8,#ff00f2,#ff00eb,#ff00e4,#ff00dc,#ff00d3,#ff00cb,#ff00c3,#ff00bb,#ff00b4,#ff00ac,#ff00a5,#ff009d,#ff0096)"></div><div style="height:5.989px;background:linear-gradient(90deg,#2300ff,#2500ff,#2600ff,#2500ff,#2400ff,#2300ff,#2300ff,#2200ff,#2100ff,#2200ff,#2403ff,#2606ff,#2a09ff,#2f0cff,#340eff,#3a0fff,#4210ff,#4c11ff,#5a12ff,#6913ff,#7a14ff,#8b14ff,#9c14ff,#aa12ff,#b70fff,#c30cff,#ce08ff,#d804ff,#e100ff,#ea00ff,#f100ff,#f700ff,#fd00ff,#ff00fb,#ff00f4,#ff00ed,#ff00e6,#ff00dd,#ff00d5,#ff00cc,#ff00c4,#ff00bd,#ff00b5,#ff00ae,#ff00a7,#ff009f,#ff0098)"></div><div style="height:5.989px;background:linear-gradient(90deg,#2500ff,#2800ff,#2900ff,#2800ff,#2700ff,#2600ff,#2500ff,#2500ff,#2400ff,#2400ff,#2401ff,#2603ff,#2906ff,#2e08ff,#330aff,#390bff,#410cff,#4a0cff,#570dff,#670eff,#780fff,#890fff,#9a0eff,#a80dff,#b50aff,#c108ff,#cc04ff,#d601ff,#df00ff,#e800ff,#ef00ff,#f500ff,#fb00ff,#ff00fd,#ff00f7,#ff00ef,#ff00e8,#ff00df,#ff00d6,#ff00ce,#ff00c5,#ff00be,#ff00b7,#ff00b0,#ff00a8,#ff00a1,#ff009a)"></div><div style="height:5.989px;background:linear-gradient(90deg,#2800ff,#2a00ff,#2b00ff,#2b00ff,#2a00ff,#2900ff,#2800ff,#2700ff,#2700ff,#2600ff,#2600ff,#2601ff,#2903ff,#2d05ff,#3206ff,#3807ff,#3f07ff,#4908ff,#5508ff,#6509ff,#760aff,#870aff,#9809ff,#a708ff,#b306ff,#bf03ff,#ca01ff,#d400ff,#de00ff,#e600ff,#ed00ff,#f300ff,#f900ff,#fe00ff,#ff00f9,#ff00f1,#ff00e9,#ff00e1,#ff00d8,#ff00cf,#ff00c6,#ff00bf,#ff00b8,#ff00b1,#ff00aa,#ff00a3,#ff009c)"></div><div style="height:5.989px;background:linear-gradient(90deg,#2a00ff,#2c00ff,#2d00ff,#2e00ff,#2d00ff,#2c00ff,#2a00ff,#2a00ff,#2900ff,#2900ff,#2800ff,#2800ff,#2800ff,#2c02ff,#3103ff,#3703ff,#3e03ff,#4703ff,#5404ff,#6305ff,#7405ff,#8505ff,#9604ff,#a503ff,#b201ff,#bd00ff,#c900ff,#d300ff,#dc00ff,#e400ff,#eb00ff,#f100ff,#f700ff,#fc00ff,#ff00fa,#ff00f3,#ff00eb,#ff00e2,#ff00d9,#ff00d0,#ff00c7,#ff00c0,#ff00ba,#ff00b3,#ff00ac,#ff00a5,#ff009e)"></div><div style="height:5.989px;background:linear-gradient(90deg,#2c00ff,#2e00ff,#3000ff,#3000ff,#2f00ff,#2e00ff,#2c00ff,#2c00ff,#2c00ff,#2b00ff,#2a00ff,#2a00ff,#2a00ff,#2d00ff,#3100ff,#3600ff,#3d00ff,#4600ff,#5200ff,#6200ff,#7301ff,#8401ff,#9400ff,#a300ff,#b100ff,#bd00ff,#c700ff,#d100ff,#da00ff,#e200ff,#e900ff,#ef00ff,#f500ff,#fb00ff,#ff00fc,#ff00f5,#ff00ed,#ff00e4,#ff00db,#ff00d1,#ff00c9,#ff00c2,#ff00bb,#ff00b4,#ff00ae,#ff00a7,#ff00a0)"></div><div style="height:5.989px;background:linear-gradient(90deg,#2f00ff,#3000ff,#3200ff,#3200ff,#3200ff,#3000ff,#2f00ff,#2e00ff,#2e00ff,#2e00ff,#2d00ff,#2c00ff,#2d00ff,#2f00ff,#3300ff,#3800ff,#3f00ff,#4800ff,#5400ff,#6300ff,#7300ff,#8400ff,#9400ff,#a300ff,#b000ff,#bc00ff,#c600ff,#d000ff,#d900ff,#e100ff,#e700ff,#ed00ff,#f300ff,#f900ff,#ff00fe,#ff00f6,#ff00ee,#ff00e5,#ff00dc,#ff00d3,#ff00ca,#ff00c3,#ff00bd,#ff00b6,#ff00af,#ff00a8,#ff00a2)"></div></div></div>
<svg style="position:absolute;left:0;top:0" width="2000" height="1121" viewBox="0 0 2000 1121">
<defs><clipPath id="imgclip"><rect x="474" y="534" width="895" height="501"/></clipPath></defs><path d="M1010.0 1037.0 C971.3 1036.1 1013.5 1033.7 1017.8 1031.8 C1022.1 1029.9 1029.8 1027.5 1035.7 1025.6 C1041.7 1023.7 1047.5 1022.1 1053.5 1020.2 C1059.5 1018.3 1065.5 1016.4 1071.4 1014.0 C1077.4 1011.6 1084.5 1008.8 1089.2 1006.0 C1094.0 1003.2 1097.2 999.6 1099.9 997.5 C1102.6 995.4 1104.7 995.8 1105.5 993.5 C1106.3 991.2 1105.1 987.0 1104.5 983.5 C1103.9 980.0 1102.9 976.4 1101.8 972.8 C1100.7 969.2 1099.4 965.5 1097.8 962.1 C1096.2 958.8 1094.2 955.8 1092.4 952.7 C1090.6 949.6 1087.9 947.2 1087.0 943.4 C1086.1 939.6 1086.8 934.7 1086.8 930.0 C1086.8 925.3 1086.5 920.6 1087.0 915.2 C1087.5 909.8 1087.7 903.4 1089.7 897.8 C1091.7 892.2 1095.2 886.3 1099.1 881.8 C1103.0 877.2 1108.2 873.3 1113.0 870.5 C1117.8 867.7 1123.3 866.4 1128.0 865.2 C1132.7 864.0 1137.0 863.3 1141.0 863.5 C1145.0 863.7 1148.7 865.2 1152.0 866.5 C1155.3 867.8 1156.6 868.9 1160.7 871.0 C1164.8 873.1 1172.7 876.0 1176.7 879.1 C1180.7 882.2 1183.2 884.9 1184.8 889.8 C1186.4 894.7 1185.9 903.4 1186.1 908.5 C1186.3 913.6 1185.6 917.0 1186.1 920.6 C1186.5 924.2 1188.6 926.6 1188.8 930.0 C1189.0 933.4 1188.6 937.1 1187.5 940.7 C1186.4 944.3 1183.9 947.8 1182.1 951.4 C1180.3 955.0 1178.2 958.5 1176.7 962.1 C1175.2 965.7 1174.3 969.2 1173.4 972.8 C1172.5 976.4 1171.8 980.4 1171.4 983.5 C1171.1 986.6 1170.4 989.2 1171.3 991.7 C1172.2 994.2 1174.0 996.4 1176.7 998.8 C1179.4 1001.2 1182.7 1003.3 1187.4 1006.0 C1192.2 1008.7 1199.3 1011.9 1205.2 1014.9 C1211.1 1017.9 1216.5 1020.7 1223.0 1023.8 C1229.5 1026.9 1240.0 1031.4 1244.5 1033.6 C1249.0 1035.8 1289.1 1036.4 1250.0 1037.0 C1210.9 1037.6 1048.7 1037.9 1010.0 1037.0 Z" fill="#000" clip-path="url(#imgclip)"/>
<path d="M1120.5 918.5 L1145.4 942.6 M1145.4 918.5 L1120.5 942.6" stroke="#8a8a8a" stroke-width="1.6"/>
<g fill="none">
<rect x="940.5" y="822" width="384" height="216" stroke="#000" stroke-opacity="0.36" stroke-width="6.4"/>
<rect x="940.5" y="822" width="384" height="216" stroke="#fff" stroke-width="2"/>
<rect x="928" y="809.5" width="25" height="25" stroke="#000" stroke-opacity="0.4" stroke-width="5.5"/>
<rect x="928" y="809.5" width="25" height="25" stroke="#fff" stroke-width="2"/>
<rect x="1313" y="810.5" width="23" height="23" stroke="#000" stroke-opacity="0.3" stroke-width="4"/>
<rect x="1313" y="810.5" width="23" height="23" stroke="#fff" stroke-width="2"/>
<rect x="929" y="1027.5" width="23" height="23" stroke="#000" stroke-opacity="0.3" stroke-width="4"/>
<rect x="929" y="1027.5" width="23" height="23" stroke="#fff" stroke-width="2"/>
<rect x="1313" y="1027.5" width="23" height="23" stroke="#000" stroke-opacity="0.3" stroke-width="4"/>
<rect x="1313" y="1027.5" width="23" height="23" stroke="#fff" stroke-width="2"/>
</g>
<path d="M1036.6 785.6 L1036.6 809.5 L1041.6 805 L1046.8 817.6 L1050.8 815.9 L1046.8 803.9 L1055 803.9 Z" fill="#000" stroke="#fff" stroke-width="3.2" stroke-linejoin="round" paint-order="stroke"/>
</svg>
<div class="t" style="left:1486.42px;top:166.41px;font-size:25.50px;color:#9c9c9e;transform:scaleX(1.0629);-webkit-text-stroke:0.25px #9c9c9e;">output</div>
<div style="position:absolute;left:1481px;top:202px;width:391px;height:49px;background:#28282a;border:2px solid #565658;border-radius:8px;box-sizing:border-box;"></div>
<div class="t" style="left:1506.65px;top:214.26px;font-size:24.62px;color:#ffffff;transform:scaleX(1.0424);-webkit-text-stroke:0.7px #ffffff;">Syphon</div>
<svg style="position:absolute;left:1835px;top:222px" width="19" height="9" viewBox="0 0 19 9"><path d="M0 0 H19 L9.5 9 Z" fill="#fff"/></svg>
<svg style="position:absolute;left:1891px;top:204.1px" width="40" height="40" viewBox="-20 -20 40 40"><g fill="#fff"><rect x="-2.7" y="-18.2" width="5.4" height="8" transform="rotate(0)"/><rect x="-2.7" y="-18.2" width="5.4" height="8" transform="rotate(45)"/><rect x="-2.7" y="-18.2" width="5.4" height="8" transform="rotate(90)"/><rect x="-2.7" y="-18.2" width="5.4" height="8" transform="rotate(135)"/><rect x="-2.7" y="-18.2" width="5.4" height="8" transform="rotate(180)"/><rect x="-2.7" y="-18.2" width="5.4" height="8" transform="rotate(225)"/><rect x="-2.7" y="-18.2" width="5.4" height="8" transform="rotate(270)"/><rect x="-2.7" y="-18.2" width="5.4" height="8" transform="rotate(315)"/></g><circle r="13.2" fill="#fff"/><circle r="5" fill="#333336"/></svg>
<div class="t" style="left:1486.03px;top:266.03px;font-size:25.48px;color:#9c9c9e;transform:scaleX(0.9844);-webkit-text-stroke:0.25px #9c9c9e;">size</div>
<div class="t" style="left:1568.05px;top:265.53px;font-size:26.07px;color:#ffffff;transform:scaleX(0.9447);-webkit-text-stroke:0.7px #ffffff;">1280</div>
<svg style="position:absolute;left:0;top:0" width="2000" height="1121" viewBox="0 0 2000 1121"><g fill="#b4b4b4"><rect x="1561.65" y="295.1" width="2.5" height="6.9" rx="0.6"/><rect x="1566.18" y="295.1" width="2.5" height="6.9" rx="0.6"/><rect x="1570.71" y="295.1" width="2.5" height="6.9" rx="0.6"/><rect x="1575.25" y="295.1" width="2.5" height="6.9" rx="0.6"/><rect x="1579.78" y="295.1" width="2.5" height="6.9" rx="0.6"/><rect x="1584.31" y="295.1" width="2.5" height="6.9" rx="0.6"/><rect x="1588.84" y="295.1" width="2.5" height="6.9" rx="0.6"/><rect x="1593.38" y="295.1" width="2.5" height="6.9" rx="0.6"/><rect x="1597.91" y="295.1" width="2.5" height="6.9" rx="0.6"/><rect x="1602.44" y="295.1" width="2.5" height="6.9" rx="0.6"/><rect x="1606.97" y="295.1" width="2.5" height="6.9" rx="0.6"/><rect x="1611.51" y="295.1" width="2.5" height="6.9" rx="0.6"/><rect x="1616.04" y="295.1" width="2.5" height="6.9" rx="0.6"/><rect x="1620.57" y="295.1" width="2.5" height="6.9" rx="0.6"/><rect x="1625.10" y="295.1" width="2.5" height="6.9" rx="0.6"/><rect x="1629.64" y="295.1" width="2.5" height="6.9" rx="0.6"/><rect x="1634.17" y="295.1" width="2.5" height="6.9" rx="0.6"/><rect x="1638.70" y="295.1" width="2.5" height="6.9" rx="0.6"/></g></svg>
<div class="t" style="left:1713.95px;top:265.53px;font-size:26.07px;color:#ffffff;transform:scaleX(0.9991);-webkit-text-stroke:0.7px #ffffff;">720</div>
<svg style="position:absolute;left:0;top:0" width="2000" height="1121" viewBox="0 0 2000 1121"><g fill="#b4b4b4"><rect x="1708.40" y="295.1" width="2.5" height="6.9" rx="0.6"/><rect x="1713.01" y="295.1" width="2.5" height="6.9" rx="0.6"/><rect x="1717.61" y="295.1" width="2.5" height="6.9" rx="0.6"/><rect x="1722.22" y="295.1" width="2.5" height="6.9" rx="0.6"/><rect x="1726.83" y="295.1" width="2.5" height="6.9" rx="0.6"/><rect x="1731.44" y="295.1" width="2.5" height="6.9" rx="0.6"/><rect x="1736.04" y="295.1" width="2.5" height="6.9" rx="0.6"/><rect x="1740.65" y="295.1" width="2.5" height="6.9" rx="0.6"/><rect x="1745.26" y="295.1" width="2.5" height="6.9" rx="0.6"/><rect x="1749.86" y="295.1" width="2.5" height="6.9" rx="0.6"/><rect x="1754.47" y="295.1" width="2.5" height="6.9" rx="0.6"/><rect x="1759.08" y="295.1" width="2.5" height="6.9" rx="0.6"/><rect x="1763.69" y="295.1" width="2.5" height="6.9" rx="0.6"/><rect x="1768.29" y="295.1" width="2.5" height="6.9" rx="0.6"/><rect x="1772.90" y="295.1" width="2.5" height="6.9" rx="0.6"/></g></svg>
<div class="t" style="left:1486.33px;top:350.72px;font-size:26.44px;color:#9c9c9e;transform:scaleX(0.9603);-webkit-text-stroke:0.25px #9c9c9e;">canvases</div>
<div style="position:absolute;left:1485px;top:389px;width:446px;height:235px;background:#fff;box-shadow:inset 0 0 0 2px #c8c8c8;"></div>
<div style="position:absolute;left:1487px;top:391px;width:442px;height:33.80000000000001px;background:#dcdcdc;"></div>
<div style="position:absolute;left:1487px;top:426.5px;width:442px;height:37.0px;background:#f5f5f6;"></div>
<div style="position:absolute;left:1487px;top:463.5px;width:442px;height:36.0px;background:#ffffff;"></div>
<div style="position:absolute;left:1487px;top:499.5px;width:442px;height:36.0px;background:#f5f5f6;"></div>
<div style="position:absolute;left:1487px;top:535.5px;width:442px;height:37.0px;background:#ffffff;"></div>
<div style="position:absolute;left:1487px;top:572.5px;width:442px;height:36.0px;background:#f5f5f6;"></div>
<div style="position:absolute;left:1487px;top:608.5px;width:442px;height:13.5px;background:#ffffff;"></div>
<div class="t" style="left:1495.50px;top:396.87px;font-size:25.43px;color:#1c1c1e;transform:scaleX(0.9838);-webkit-text-stroke:0.2px #1c1c1e;">Canvas 2</div>
<div class="t" style="left:1495.50px;top:433.37px;font-size:25.43px;color:#1c1c1e;transform:scaleX(0.9410);-webkit-text-stroke:0.2px #1c1c1e;">Canvas 1</div>
<div style="position:absolute;left:1485.4px;top:633px;width:42.19999999999982px;height:43px;background:#29292b;border:2px solid #545456;border-radius:8px;box-sizing:border-box;"></div>
<div style="position:absolute;left:1499.8px;top:655px;width:18.299999999999955px;height:4.2000000000000455px;background:#fff;"></div>
<div style="position:absolute;left:1506.8px;top:648px;width:4.5px;height:18px;background:#fff;"></div>
<div style="position:absolute;left:1891px;top:635.4px;width:42.5px;height:42.60000000000002px;background:#29292b;border:2px solid #545456;border-radius:8px;box-sizing:border-box;"></div>
<div style="position:absolute;left:1902.8px;top:653.4px;width:19.200000000000045px;height:5.0px;background:#fff;"></div>
<div class="t" style="left:1485.83px;top:757.31px;font-size:24.79px;color:#9c9c9e;transform:scaleX(1.0974);-webkit-text-stroke:0.25px #9c9c9e;">constraint</div>
<div style="position:absolute;left:1632.5px;top:744px;width:297.5px;height:48.5px;background:#28282a;border:2px solid #565658;border-radius:8px;box-sizing:border-box;"></div>
<div class="t" style="left:1658.05px;top:756.52px;font-size:25.72px;color:#ffffff;transform:scaleX(1.0139);-webkit-text-stroke:0.7px #ffffff;">same ratio</div>
<svg style="position:absolute;left:1894.7px;top:763.7px" width="17.299999999999955" height="10.0" viewBox="0 0 17.299999999999955 10.0"><path d="M0 0 H17.299999999999955 L8.649999999999977 10.0 Z" fill="#fff"/></svg>
<div class="t" style="left:1511.53px;top:820.01px;font-size:24.79px;color:#9c9c9e;transform:scaleX(1.0801);-webkit-text-stroke:0.25px #9c9c9e;">position</div>
<div class="t" style="left:1641.85px;top:819.54px;font-size:25.36px;color:#ffffff;transform:scaleX(0.9493);-webkit-text-stroke:0.7px #ffffff;">301</div>
<svg style="position:absolute;left:0;top:0" width="2000" height="1121" viewBox="0 0 2000 1121"><g fill="#b4b4b4"><rect x="1636.20" y="848.6" width="2.5" height="7.6" rx="0.6"/><rect x="1640.79" y="848.6" width="2.5" height="7.6" rx="0.6"/><rect x="1645.38" y="848.6" width="2.5" height="7.6" rx="0.6"/><rect x="1649.97" y="848.6" width="2.5" height="7.6" rx="0.6"/><rect x="1654.57" y="848.6" width="2.5" height="7.6" rx="0.6"/><rect x="1659.16" y="848.6" width="2.5" height="7.6" rx="0.6"/><rect x="1663.75" y="848.6" width="2.5" height="7.6" rx="0.6"/><rect x="1668.34" y="848.6" width="2.5" height="7.6" rx="0.6"/><rect x="1672.93" y="848.6" width="2.5" height="7.6" rx="0.6"/><rect x="1677.53" y="848.6" width="2.5" height="7.6" rx="0.6"/><rect x="1682.12" y="848.6" width="2.5" height="7.6" rx="0.6"/><rect x="1686.71" y="848.6" width="2.5" height="7.6" rx="0.6"/><rect x="1691.30" y="848.6" width="2.5" height="7.6" rx="0.6"/></g></svg>
<div class="t" style="left:1769.15px;top:819.54px;font-size:25.36px;color:#ffffff;transform:scaleX(1.0924);-webkit-text-stroke:0.7px #ffffff;">-208</div>
<svg style="position:absolute;left:0;top:0" width="2000" height="1121" viewBox="0 0 2000 1121"><g fill="#b4b4b4"><rect x="1763.10" y="848.6" width="2.5" height="7.6" rx="0.6"/><rect x="1767.65" y="848.6" width="2.5" height="7.6" rx="0.6"/><rect x="1772.19" y="848.6" width="2.5" height="7.6" rx="0.6"/><rect x="1776.74" y="848.6" width="2.5" height="7.6" rx="0.6"/><rect x="1781.29" y="848.6" width="2.5" height="7.6" rx="0.6"/><rect x="1785.83" y="848.6" width="2.5" height="7.6" rx="0.6"/><rect x="1790.38" y="848.6" width="2.5" height="7.6" rx="0.6"/><rect x="1794.93" y="848.6" width="2.5" height="7.6" rx="0.6"/><rect x="1799.47" y="848.6" width="2.5" height="7.6" rx="0.6"/><rect x="1804.02" y="848.6" width="2.5" height="7.6" rx="0.6"/><rect x="1808.57" y="848.6" width="2.5" height="7.6" rx="0.6"/><rect x="1813.11" y="848.6" width="2.5" height="7.6" rx="0.6"/><rect x="1817.66" y="848.6" width="2.5" height="7.6" rx="0.6"/><rect x="1822.21" y="848.6" width="2.5" height="7.6" rx="0.6"/><rect x="1826.75" y="848.6" width="2.5" height="7.6" rx="0.6"/><rect x="1831.30" y="848.6" width="2.5" height="7.6" rx="0.6"/></g></svg>
<div class="t" style="left:1513.62px;top:883.33px;font-size:24.66px;color:#9c9c9e;transform:scaleX(1.0952);-webkit-text-stroke:0.25px #9c9c9e;">rotation</div>
<div class="t" style="left:1642.05px;top:882.86px;font-size:25.21px;color:#ffffff;transform:scaleX(1.0114);-webkit-text-stroke:0.7px #ffffff;">0.00</div>
<svg style="position:absolute;left:1714px;top:882px" width="20" height="20"><circle cx="10.2" cy="9.5" r="3.4" fill="none" stroke="#9c9c9e" stroke-width="2.2"/></svg>
<svg style="position:absolute;left:0;top:0" width="2000" height="1121" viewBox="0 0 2000 1121"><g fill="#b4b4b4"><rect x="1635.70" y="912.5" width="2.5" height="6.7" rx="0.6"/><rect x="1640.22" y="912.5" width="2.5" height="6.7" rx="0.6"/><rect x="1644.75" y="912.5" width="2.5" height="6.7" rx="0.6"/><rect x="1649.27" y="912.5" width="2.5" height="6.7" rx="0.6"/><rect x="1653.79" y="912.5" width="2.5" height="6.7" rx="0.6"/><rect x="1658.31" y="912.5" width="2.5" height="6.7" rx="0.6"/><rect x="1662.84" y="912.5" width="2.5" height="6.7" rx="0.6"/><rect x="1667.36" y="912.5" width="2.5" height="6.7" rx="0.6"/><rect x="1671.88" y="912.5" width="2.5" height="6.7" rx="0.6"/><rect x="1676.40" y="912.5" width="2.5" height="6.7" rx="0.6"/><rect x="1680.93" y="912.5" width="2.5" height="6.7" rx="0.6"/><rect x="1685.45" y="912.5" width="2.5" height="6.7" rx="0.6"/><rect x="1689.97" y="912.5" width="2.5" height="6.7" rx="0.6"/><rect x="1694.50" y="912.5" width="2.5" height="6.7" rx="0.6"/><rect x="1699.02" y="912.5" width="2.5" height="6.7" rx="0.6"/><rect x="1703.54" y="912.5" width="2.5" height="6.7" rx="0.6"/><rect x="1708.06" y="912.5" width="2.5" height="6.7" rx="0.6"/><rect x="1712.59" y="912.5" width="2.5" height="6.7" rx="0.6"/><rect x="1717.11" y="912.5" width="2.5" height="6.7" rx="0.6"/><rect x="1721.63" y="912.5" width="2.5" height="6.7" rx="0.6"/><rect x="1726.15" y="912.5" width="2.5" height="6.7" rx="0.6"/><rect x="1730.68" y="912.5" width="2.5" height="6.7" rx="0.6"/><rect x="1735.20" y="912.5" width="2.5" height="6.7" rx="0.6"/></g></svg>
<div class="t" style="left:1543.62px;top:945.51px;font-size:25.62px;color:#9c9c9e;transform:scaleX(1.0038);-webkit-text-stroke:0.25px #9c9c9e;">scale</div>
<div class="t" style="left:1642.05px;top:945.86px;font-size:25.21px;color:#ffffff;transform:scaleX(1.0465);-webkit-text-stroke:0.7px #ffffff;">42.84</div>
<div class="t" style="left:1735.90px;top:945.76px;font-size:25.32px;color:#a8a8aa;transform:scaleX(0.8963);-webkit-text-stroke:0.8px #a8a8aa;">%</div>
<svg style="position:absolute;left:0;top:0" width="2000" height="1121" viewBox="0 0 2000 1121"><g fill="#b4b4b4"><rect x="1635.70" y="975.8" width="2.5" height="6.9" rx="0.6"/><rect x="1640.27" y="975.8" width="2.5" height="6.9" rx="0.6"/><rect x="1644.85" y="975.8" width="2.5" height="6.9" rx="0.6"/><rect x="1649.42" y="975.8" width="2.5" height="6.9" rx="0.6"/><rect x="1654.00" y="975.8" width="2.5" height="6.9" rx="0.6"/><rect x="1658.57" y="975.8" width="2.5" height="6.9" rx="0.6"/><rect x="1663.14" y="975.8" width="2.5" height="6.9" rx="0.6"/><rect x="1667.72" y="975.8" width="2.5" height="6.9" rx="0.6"/><rect x="1672.29" y="975.8" width="2.5" height="6.9" rx="0.6"/><rect x="1676.87" y="975.8" width="2.5" height="6.9" rx="0.6"/><rect x="1681.44" y="975.8" width="2.5" height="6.9" rx="0.6"/><rect x="1686.01" y="975.8" width="2.5" height="6.9" rx="0.6"/><rect x="1690.59" y="975.8" width="2.5" height="6.9" rx="0.6"/><rect x="1695.16" y="975.8" width="2.5" height="6.9" rx="0.6"/><rect x="1699.74" y="975.8" width="2.5" height="6.9" rx="0.6"/><rect x="1704.31" y="975.8" width="2.5" height="6.9" rx="0.6"/><rect x="1708.89" y="975.8" width="2.5" height="6.9" rx="0.6"/><rect x="1713.46" y="975.8" width="2.5" height="6.9" rx="0.6"/><rect x="1718.03" y="975.8" width="2.5" height="6.9" rx="0.6"/><rect x="1722.61" y="975.8" width="2.5" height="6.9" rx="0.6"/><rect x="1727.18" y="975.8" width="2.5" height="6.9" rx="0.6"/><rect x="1731.76" y="975.8" width="2.5" height="6.9" rx="0.6"/><rect x="1736.33" y="975.8" width="2.5" height="6.9" rx="0.6"/><rect x="1740.90" y="975.8" width="2.5" height="6.9" rx="0.6"/><rect x="1745.48" y="975.8" width="2.5" height="6.9" rx="0.6"/><rect x="1750.05" y="975.8" width="2.5" height="6.9" rx="0.6"/><rect x="1754.63" y="975.8" width="2.5" height="6.9" rx="0.6"/><rect x="1759.20" y="975.8" width="2.5" height="6.9" rx="0.6"/></g></svg>
<div style="position:absolute;left:1634px;top:1013px;width:297px;height:43px;background:#28282a;border:2px solid #565658;border-radius:8px;box-sizing:border-box;"></div>
<div class="t" style="left:1716.05px;top:1021.12px;font-size:26.55px;color:#ffffff;transform:scaleX(0.9847);-webkit-text-stroke:0.7px #ffffff;">Slice Editor</div>

</body></html>
